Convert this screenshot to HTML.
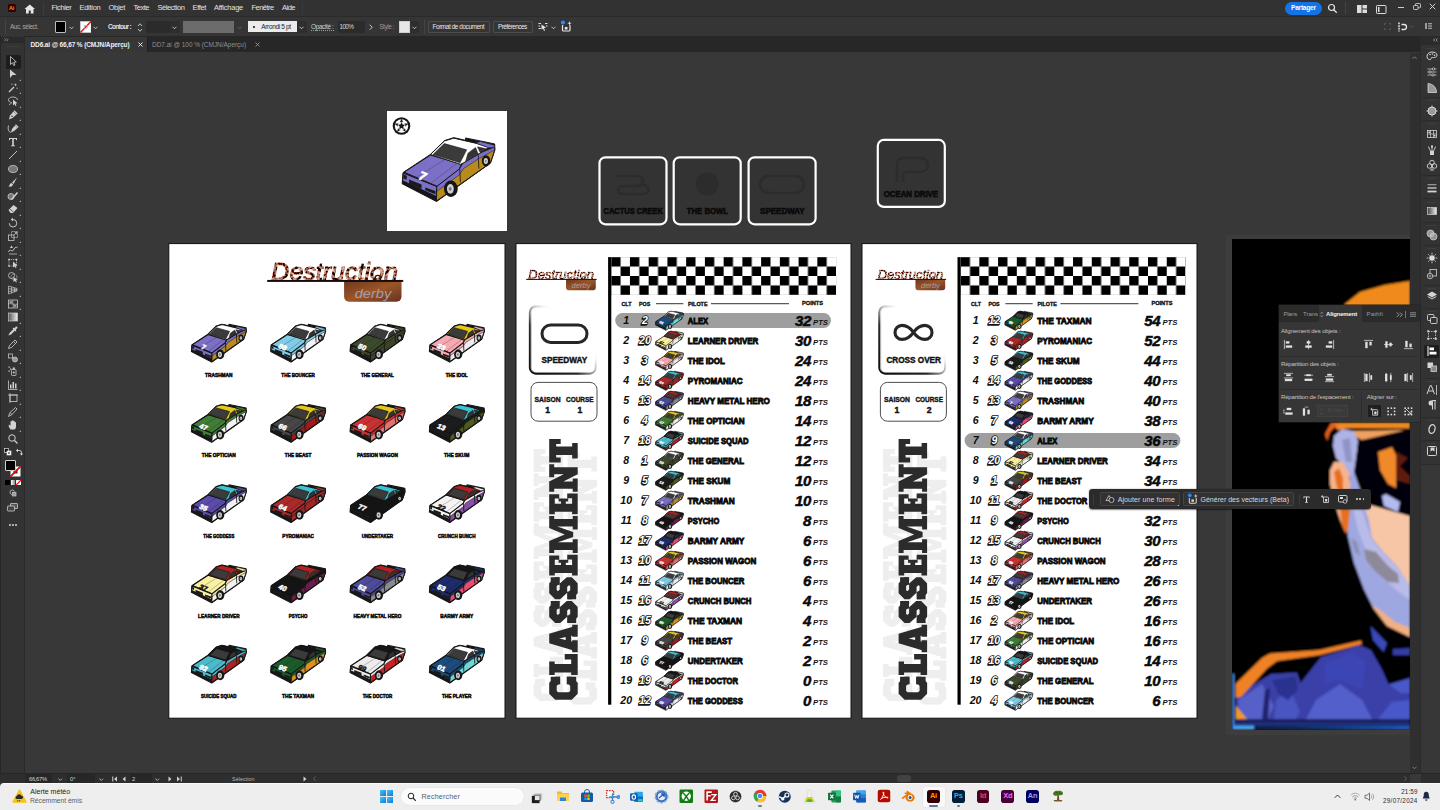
<!DOCTYPE html>
<html lang="fr"><head><meta charset="utf-8"><title>DD6.ai</title>
<style>

*{box-sizing:border-box;margin:0;padding:0}
html,body{width:1440px;height:810px;overflow:hidden;background:#383838;font-family:"Liberation Sans",sans-serif;}
body{position:relative}
.abs,.car,.t,.ab,.box{position:absolute}
.t{white-space:nowrap;line-height:1}
.ab{background:#fff;border:1px solid #0a0a0a;overflow:hidden}
.car{overflow:visible}
.cn{font:bold 62px "Liberation Sans",sans-serif;fill:var(--n)}
/* chrome */
#menubar{left:0;top:0;width:1440px;height:17px;background:#323232;border-bottom:1px solid #2b2b2b}
#ctrl{left:0;top:17px;width:1440px;height:20px;background:#353535;border-bottom:1px solid #2a2a2a}
#tabs{left:0;top:37px;width:1440px;height:16px;background:#282828}
#tools{left:0;top:37px;width:25px;height:735px;background:#333;border-right:1px solid #2a2a2a}
.m{position:absolute;top:3px;font-size:7.6px;color:#e0e0e0;white-space:nowrap;line-height:9px}
.c{position:absolute;font-size:6.2px;color:#d6d6d6;white-space:nowrap;line-height:8px}
/* names */
.nm{position:absolute;font-weight:bold;font-size:8.3px;color:#111;white-space:nowrap;line-height:10px;-webkit-text-stroke:0.35px #111;letter-spacing:0.1px}
.num{position:absolute;font-weight:bold;font-style:italic;font-size:11px;color:#111;white-space:nowrap;line-height:12px;text-align:center;width:20px}
.pos{position:absolute;font-weight:bold;font-style:italic;font-size:10.5px;color:#fff;-webkit-text-stroke:0.9px #111;white-space:nowrap;line-height:12px;text-align:center;width:20px}
.pts{position:absolute;font-weight:bold;font-style:italic;font-size:14.5px;color:#0a0a0a;white-space:nowrap;line-height:14px;text-align:right;width:40px;-webkit-text-stroke:0.4px #0a0a0a;letter-spacing:-0.5px}
.pt{position:absolute;font-weight:bold;font-style:italic;font-size:7.6px;color:#111;white-space:nowrap;line-height:9px;letter-spacing:0.2px}
.hd{position:absolute;font-weight:bold;font-size:5.6px;color:#111;white-space:nowrap;line-height:6px;-webkit-text-stroke:0.3px #111;letter-spacing:0.3px}
.lb{position:absolute;font-weight:bold;font-size:4.9px;color:#111;white-space:nowrap;line-height:6px;-webkit-text-stroke:0.45px #111;text-align:center;width:80px;letter-spacing:0.15px}

.mn{font-size:7.7px;color:#e2e2e2;line-height:9px;text-align:justify;text-align-last:justify;letter-spacing:0}

</style></head>
<body>
<svg class="abs" style="left:0;top:0" width="1440" height="810" viewBox="0 0 1440 810" font-family="Liberation Sans, sans-serif">
<defs>
<g id="car">
 <g stroke="#161616" stroke-width="var(--sw)" stroke-linejoin="round">
  <polygon points="128,470 134,402 300,292 385,208 442,190 512,206 514,192 690,228 692,264 664,345 337,578" fill="#161616"/>
  <polygon points="338,487 478,378 498,345 600,285 688,248 690,266 665,343 337,575" fill="var(--s)"/>
  <polygon points="338,487 478,378 498,345 600,285 688,248 688,266 600,314 498,380 478,414 338,517" fill="var(--b)" stroke-width="calc(var(--sw) * 0.5)"/>
  <polygon points="140,400 300,296 487,350 476,380 340,485" fill="var(--b)"/>
  <polygon points="135,405 338,487 336,548 131,452" fill="var(--b)"/>
  <polygon points="300,292 385,210 442,193 580,225 655,250 600,285 498,345 482,352" fill="var(--r)"/>
  <polygon points="575,222 602,213 688,236 688,248 655,252" fill="var(--b)" stroke-width="calc(var(--sw) * 0.5)"/>
 </g>
 <polygon points="316,292 384,226 520,264 480,342" fill="#3b3b3b" stroke="#161616" stroke-width="calc(var(--sw) * 0.6)"/>
 <polygon points="528,284 574,250 590,290 514,332" fill="#333" stroke="#161616" stroke-width="calc(var(--sw) * 0.5)"/>
 <polygon points="586,246 640,258 602,281" fill="#333" stroke="#161616" stroke-width="calc(var(--sw) * 0.5)"/>
 <polygon points="170,444 246,474 246,502 170,470" fill="#1a1a1a"/>
 <polygon points="268,492 330,514 330,534 268,510" fill="#1a1a1a"/>
 <polygon points="136,414 156,422 156,446 136,438" fill="#1a1a1a"/>
 <line x1="478" y1="380" x2="482" y2="462" stroke="#161616" stroke-width="calc(var(--sw) * 0.8)"/>
 <line x1="590" y1="292" x2="594" y2="378" stroke="#161616" stroke-width="calc(var(--sw) * 0.8)"/>
 <line x1="215" y1="430" x2="390" y2="322" stroke="#161616" stroke-width="calc(var(--sw) * 0.4)" opacity=".6"/>
 <line x1="300" y1="470" x2="455" y2="350" stroke="#161616" stroke-width="calc(var(--sw) * 0.4)" opacity=".6"/>
 <ellipse cx="424" cy="500" rx="42" ry="50" fill="#161616"/>
 <ellipse cx="421" cy="501" rx="21" ry="29" fill="#cfcfcf"/>
 <ellipse cx="420" cy="501" rx="9" ry="12" fill="#777"/>
 <ellipse cx="638" cy="331" rx="26" ry="34" fill="#161616"/>
 <ellipse cx="636.5" cy="332" rx="13" ry="18" fill="#cfcfcf"/>
 <ellipse cx="636" cy="332" rx="5" ry="7" fill="#777"/>
</g>
<pattern id="chk" x="611.2" y="257.1" width="18.74" height="18.9" patternUnits="userSpaceOnUse">
 <rect x="0" y="0" width="9.37" height="9.45" fill="#000"/><rect x="9.37" y="9.45" width="9.37" height="9.45" fill="#000"/>
</pattern>
<linearGradient id="rust" x1="0" y1="0" x2="1" y2="1">
 <stop offset="0" stop-color="#6e361e"/><stop offset=".5" stop-color="#9c5626"/><stop offset="1" stop-color="#643226"/>
</linearGradient>
<linearGradient id="rustt" x1="0" y1="0" x2="1" y2="0">
 <stop offset="0" stop-color="#7a2f2a"/><stop offset=".3" stop-color="#a0604a"/><stop offset=".55" stop-color="#6e3328"/><stop offset=".8" stop-color="#a86a50"/><stop offset="1" stop-color="#5a2a22"/>
</linearGradient>
<filter id="rustf" x="0" y="0" width="100%" height="100%"><feTurbulence type="fractalNoise" baseFrequency="0.6" numOctaves="2" seed="7" result="n"/><feColorMatrix in="n" type="matrix" values="2.0 0 0 0 -0.72  1.5 0 0 0 -0.66  1.25 0 0 0 -0.58  0 0 0 0 1" result="c"/><feComposite in="c" in2="SourceGraphic" operator="in"/></filter>
<linearGradient id="fadeb" x1="0" y1="1" x2="1" y2="0">
 <stop offset="0" stop-color="#0c0c0c"/><stop offset=".36" stop-color="#111" stop-opacity=".9"/><stop offset=".5" stop-color="#444" stop-opacity=".45"/><stop offset=".6" stop-color="#888" stop-opacity=".1"/><stop offset=".66" stop-color="#fff" stop-opacity="0"/><stop offset="1" stop-color="#fff" stop-opacity="0"/>
</linearGradient>
</defs>
<defs><g id="clsm"><path d="M15.50 1.50h7.50v9.50h-7.50z M15.50 17.50h7.50v9.50h-7.50z M27.28 0.00h8.50v28.50h-8.50z M24.78 0.00h13.50v5.50h-13.50z M24.78 22.00h21.00v6.50h-21.00z M40.28 15.50h5.50v13.00h-5.50z M56.56 0.00 L66.06 0.00 L74.56 28.50 L65.56 28.50 L61.31 10.00 L57.06 28.50 L48.06 28.50z M54.56 16.50h13.50v5.50h-13.50z M47.56 23.00h12.00v5.50h-12.00z M63.06 23.00h12.00v5.50h-12.00z M91.34 1.50h7.50v9.00h-7.50z M76.84 18.00h7.50v9.00h-7.50z M115.12 1.50h7.50v9.00h-7.50z M100.62 18.00h7.50v9.00h-7.50z M126.90 0.00h8.00v28.50h-8.00z M124.40 0.00h20.00v5.60h-20.00z M140.00 0.00h4.40v10.00h-4.40z M132.40 11.80h7.60v4.80h-7.60z M137.00 9.40h3.00v9.60h-3.00z M124.40 22.90h20.70v5.60h-20.70z M140.40 18.00h4.70v10.50h-4.70z M149.88 0.00h7.60v28.50h-7.60z M173.28 0.00h7.60v28.50h-7.60z M149.88 0.00 L158.88 0.00 L165.38 15.50 L171.88 0.00 L180.88 0.00 L180.88 5.00 L174.38 5.00 L167.88 24.00 L162.88 24.00 L156.38 5.00 L149.88 5.00z M146.88 0.00h8.00v5.00h-8.00z M175.88 0.00h8.00v5.00h-8.00z M146.88 23.50h13.60v5.00h-13.60z M170.28 23.50h13.60v5.00h-13.60z M188.16 0.00h8.00v28.50h-8.00z M185.66 0.00h20.00v5.60h-20.00z M201.26 0.00h4.40v10.00h-4.40z M193.66 11.80h7.60v4.80h-7.60z M198.26 9.40h3.00v9.60h-3.00z M185.66 22.90h20.70v5.60h-20.70z M201.66 18.00h4.70v10.50h-4.70z M211.14 0.00h7.20v28.50h-7.20z M225.44 0.00h7.20v28.50h-7.20z M211.14 0.00 L218.34 0.00 L232.64 28.50 L225.44 28.50z M208.14 0.00h10.50v5.00h-10.50z M208.14 23.50h13.20v5.00h-13.20z M222.44 0.00h13.20v5.00h-13.20z M237.42 0.00h23.40v7.00h-23.40z M237.42 0.00h5.00v11.50h-5.00z M255.82 0.00h5.00v11.50h-5.00z M244.87 0.00h8.50v28.50h-8.50z M241.42 23.00h15.40v5.50h-15.40z"/><path d="M19.25 10.50 L19.25 7.50 L15.50 3.75 L7.50 3.75 L3.75 7.50 L3.75 21.00 L7.50 24.75 L15.50 24.75 L19.25 21.00 L19.25 18.00 M95.09 10.00 L95.09 7.50 L91.34 3.75 L84.34 3.75 L80.59 7.50 L80.59 9.50 L84.84 14.25 L90.84 14.25 L95.09 19.00 L95.09 21.00 L91.34 24.75 L84.34 24.75 L80.59 21.00 L80.59 18.50 M118.87 10.00 L118.87 7.50 L115.12 3.75 L108.12 3.75 L104.37 7.50 L104.37 9.50 L108.62 14.25 L114.62 14.25 L118.87 19.00 L118.87 21.00 L115.12 24.75 L108.12 24.75 L104.37 21.00 L104.37 18.50" fill="none" stroke="currentColor" stroke-width="7.5" stroke-linejoin="miter"/></g></defs>
<rect x="387" y="111" width="120" height="120" fill="#fff"/>
<svg x="400.8" y="136.0" width="95.5" height="66.7" viewBox="120 180 580 405" overflow="visible" style="--b:#7b70c6;--s:#b98a1c;--r:#ffffff;--sw:6"><use href="#car"/><text x="0" y="0" font-size="74" font-weight="bold" fill="#fff" stroke="#fff" stroke-width="5" text-anchor="middle" transform="matrix(0.93,0.37,-0.5,0.85,240,446)">7</text></svg>
<circle cx="401.5" cy="126" r="8.8" fill="#161616"/><circle cx="401.5" cy="126" r="6.7" fill="#fff"/>
<polygon points="401.50,118.80 403.56,123.17 408.35,123.78 404.83,127.08 405.73,131.82 401.50,129.50 397.27,131.82 398.17,127.08 394.65,123.78 399.44,123.17" fill="#161616"/>
<circle cx="401.5" cy="126" r="3.9" fill="#fff"/>
<polygon points="401.50,122.10 402.62,124.46 405.21,124.79 403.31,126.59 403.79,129.16 401.50,127.90 399.21,129.16 399.69,126.59 397.79,124.79 400.38,124.46" fill="#161616"/>
<g>
<rect x="599.5" y="157.3" width="67" height="67" rx="6" fill="#333" stroke="#fff" stroke-width="2.2"/>
<path d="M616 176 h22 a5 5 0 0 1 0 10 h-16 a4 4 0 0 0 0 8 h22 a4.5 4.5 0 0 0 0 -9 h-8" fill="none" stroke="#2c2c2c" stroke-width="2.6"/>
<text x="603.6" y="214.3" font-size="8.2" font-weight="bold" fill="#0a0a0a" stroke="#0a0a0a" stroke-width=".6" textLength="59.3" lengthAdjust="spacingAndGlyphs">CACTUS CREEK</text>
<rect x="673.7" y="157.3" width="67" height="67" rx="6" fill="#333" stroke="#fff" stroke-width="2.2"/>
<circle cx="707" cy="184" r="11.5" fill="#2c2c2c"/>
<text x="686.8" y="214.3" font-size="8.2" font-weight="bold" fill="#0a0a0a" stroke="#0a0a0a" stroke-width=".6" textLength="41.3" lengthAdjust="spacingAndGlyphs">THE BOWL</text>
<rect x="748.6" y="157.3" width="67" height="67" rx="6" fill="#333" stroke="#fff" stroke-width="2.2"/>
<rect x="760" y="176" width="44" height="17" rx="8.5" fill="none" stroke="#2c2c2c" stroke-width="2.6"/>
<text x="760.1" y="214.3" font-size="8.2" font-weight="bold" fill="#0a0a0a" stroke="#0a0a0a" stroke-width=".6" textLength="44.5" lengthAdjust="spacingAndGlyphs">SPEEDWAY</text>
</g>
<rect x="877.8" y="139.9" width="67" height="67" rx="6" fill="#333" stroke="#fff" stroke-width="2.2"/>
<path d="M897 182 v-18 a6 6 0 0 1 6 -6 h18 a7 7 0 0 1 0 14 h-14 a4 4 0 0 0 -4 4 v6" fill="none" stroke="#2c2c2c" stroke-width="2.6"/>
<text x="883.8" y="197" font-size="8.2" font-weight="bold" fill="#0a0a0a" stroke="#0a0a0a" stroke-width=".6" textLength="54.2" lengthAdjust="spacingAndGlyphs">OCEAN DRIVE</text>
<rect x="168.8" y="243.6" width="336.2" height="474.6" fill="#fff" stroke="#101010" stroke-width="1"/>
<g transform="translate(267.2,262.8) scale(1.889)"><path d="M40.7 9.6 H71.1 V18 a2.6 2.6 0 0 1 -2.6 2.6 H43.3 a2.6 2.6 0 0 1 -2.6 -2.6 Z" fill="url(#rust)"/><text x="56" y="18.4" font-size="6.5" font-style="italic" fill="#a69cac" text-anchor="middle" textLength="19.3" lengthAdjust="spacingAndGlyphs">derby</text><text x="2.2" y="9.15" font-size="12.8" font-style="italic" fill="#7a3626" stroke="#7a3626" stroke-width=".5" textLength="67" lengthAdjust="spacingAndGlyphs" filter="url(#rustf)">Destruction</text><rect x="0" y="9.07" width="72" height="1.05" fill="#140c0c"/><circle cx="58.6" cy="8.2" r="1.5" fill="none" stroke="#2a1410" stroke-width=".7"/></g>
<svg x="190.6" y="323.2" width="56.5" height="39.5" viewBox="120 180 580 405" overflow="visible" style="--b:#7b70c6;--s:#b98a1c;--r:#ffffff;--sw:11"><use href="#car"/><text x="0" y="0" font-size="74" font-weight="bold" fill="#fff" stroke="#fff" stroke-width="5" text-anchor="middle" transform="matrix(0.93,0.37,-0.5,0.85,240,446)">7</text></svg>
<text x="218.8" y="377.0" font-size="5.2" font-weight="bold" fill="#0c0c0c" stroke="#0c0c0c" stroke-width=".5" text-anchor="middle" textLength="27.5" lengthAdjust="spacingAndGlyphs">TRASHMAN</text>
<svg x="269.9" y="323.2" width="56.5" height="39.5" viewBox="120 180 580 405" overflow="visible" style="--b:#7fcbe8;--s:#f2f2f2;--r:#ffffff;--sw:11"><use href="#car"/><text x="0" y="0" font-size="74" font-weight="bold" fill="#fff" stroke="#fff" stroke-width="5" text-anchor="middle" transform="matrix(0.93,0.37,-0.5,0.85,240,446)">88</text></svg>
<text x="298.1" y="377.0" font-size="5.2" font-weight="bold" fill="#0c0c0c" stroke="#0c0c0c" stroke-width=".5" text-anchor="middle" textLength="33.5" lengthAdjust="spacingAndGlyphs">THE BOUNCER</text>
<svg x="349.3" y="323.2" width="56.5" height="39.5" viewBox="120 180 580 405" overflow="visible" style="--b:#3e4a2c;--s:#3a4528;--r:#ffffff;--sw:11"><use href="#car"/><text x="0" y="0" font-size="74" font-weight="bold" fill="#fff" stroke="#fff" stroke-width="5" text-anchor="middle" transform="matrix(0.93,0.37,-0.5,0.85,240,446)">50</text></svg>
<text x="377.4" y="377.0" font-size="5.2" font-weight="bold" fill="#0c0c0c" stroke="#0c0c0c" stroke-width=".5" text-anchor="middle" textLength="33" lengthAdjust="spacingAndGlyphs">THE GENERAL</text>
<svg x="428.6" y="323.2" width="56.5" height="39.5" viewBox="120 180 580 405" overflow="visible" style="--b:#f5a9b2;--s:#ececec;--r:#e6c81c;--sw:11"><use href="#car"/><text x="0" y="0" font-size="74" font-weight="bold" fill="#fff" stroke="#fff" stroke-width="5" text-anchor="middle" transform="matrix(0.93,0.37,-0.5,0.85,240,446)">23</text></svg>
<text x="456.7" y="377.0" font-size="5.2" font-weight="bold" fill="#0c0c0c" stroke="#0c0c0c" stroke-width=".5" text-anchor="middle" textLength="22" lengthAdjust="spacingAndGlyphs">THE IDOL</text>
<svg x="190.6" y="403.4" width="56.5" height="39.5" viewBox="120 180 580 405" overflow="visible" style="--b:#3f7d38;--s:#f2f2f2;--r:#e6c81c;--sw:11"><use href="#car"/><text x="0" y="0" font-size="74" font-weight="bold" fill="#fff" stroke="#fff" stroke-width="5" text-anchor="middle" transform="matrix(0.93,0.37,-0.5,0.85,240,446)">47</text></svg>
<text x="218.8" y="457.2" font-size="5.2" font-weight="bold" fill="#0c0c0c" stroke="#0c0c0c" stroke-width=".5" text-anchor="middle" textLength="34" lengthAdjust="spacingAndGlyphs">THE OPTICIAN</text>
<svg x="269.9" y="403.4" width="56.5" height="39.5" viewBox="120 180 580 405" overflow="visible" style="--b:#474747;--s:#a31a1a;--r:#e6c81c;--sw:11"><use href="#car"/><text x="0" y="0" font-size="74" font-weight="bold" fill="#fff" stroke="#fff" stroke-width="5" text-anchor="middle" transform="matrix(0.93,0.37,-0.5,0.85,240,446)">66</text></svg>
<text x="298.1" y="457.2" font-size="5.2" font-weight="bold" fill="#0c0c0c" stroke="#0c0c0c" stroke-width=".5" text-anchor="middle" textLength="26.5" lengthAdjust="spacingAndGlyphs">THE BEAST</text>
<svg x="349.3" y="403.4" width="56.5" height="39.5" viewBox="120 180 580 405" overflow="visible" style="--b:#c93232;--s:#e27272;--r:#e6c81c;--sw:11"><use href="#car"/><text x="0" y="0" font-size="74" font-weight="bold" fill="#fff" stroke="#fff" stroke-width="5" text-anchor="middle" transform="matrix(0.93,0.37,-0.5,0.85,240,446)">69</text></svg>
<text x="377.4" y="457.2" font-size="5.2" font-weight="bold" fill="#0c0c0c" stroke="#0c0c0c" stroke-width=".5" text-anchor="middle" textLength="41" lengthAdjust="spacingAndGlyphs">PASSION WAGON</text>
<svg x="428.6" y="403.4" width="56.5" height="39.5" viewBox="120 180 580 405" overflow="visible" style="--b:#1c1c1c;--s:#4c5c1c;--r:#41c2d2;--sw:11"><use href="#car"/><text x="0" y="0" font-size="74" font-weight="bold" fill="#fff" stroke="#fff" stroke-width="5" text-anchor="middle" transform="matrix(0.93,0.37,-0.5,0.85,240,446)">13</text></svg>
<text x="456.7" y="457.2" font-size="5.2" font-weight="bold" fill="#0c0c0c" stroke="#0c0c0c" stroke-width=".5" text-anchor="middle" textLength="25.5" lengthAdjust="spacingAndGlyphs">THE SKUM</text>
<svg x="190.6" y="483.7" width="56.5" height="39.5" viewBox="120 180 580 405" overflow="visible" style="--b:#5b4caa;--s:#f2f2f2;--r:#41c2d2;--sw:11"><use href="#car"/><text x="0" y="0" font-size="74" font-weight="bold" fill="#fff" stroke="#fff" stroke-width="5" text-anchor="middle" transform="matrix(0.93,0.37,-0.5,0.85,240,446)">35</text></svg>
<text x="218.8" y="537.5" font-size="5.2" font-weight="bold" fill="#0c0c0c" stroke="#0c0c0c" stroke-width=".5" text-anchor="middle" textLength="31" lengthAdjust="spacingAndGlyphs">THE GODDESS</text>
<svg x="269.9" y="483.7" width="56.5" height="39.5" viewBox="120 180 580 405" overflow="visible" style="--b:#aa2a2a;--s:#a02626;--r:#41c2d2;--sw:11"><use href="#car"/><text x="0" y="0" font-size="74" font-weight="bold" fill="#fff" stroke="#fff" stroke-width="5" text-anchor="middle" transform="matrix(0.93,0.37,-0.5,0.85,240,446)">64</text></svg>
<text x="298.1" y="537.5" font-size="5.2" font-weight="bold" fill="#0c0c0c" stroke="#0c0c0c" stroke-width=".5" text-anchor="middle" textLength="31.5" lengthAdjust="spacingAndGlyphs">PYROMANIAC</text>
<svg x="349.3" y="483.7" width="56.5" height="39.5" viewBox="120 180 580 405" overflow="visible" style="--b:#141414;--s:#141414;--r:#41c2d2;--sw:11"><use href="#car"/><text x="0" y="0" font-size="74" font-weight="bold" fill="#fff" stroke="#fff" stroke-width="5" text-anchor="middle" transform="matrix(0.93,0.37,-0.5,0.85,240,446)">77</text></svg>
<text x="377.4" y="537.5" font-size="5.2" font-weight="bold" fill="#0c0c0c" stroke="#0c0c0c" stroke-width=".5" text-anchor="middle" textLength="31.5" lengthAdjust="spacingAndGlyphs">UNDERTAKER</text>
<svg x="428.6" y="483.7" width="56.5" height="39.5" viewBox="120 180 580 405" overflow="visible" style="--b:#f4f4f4;--s:#8b4caa;--r:#b22222;--sw:11"><use href="#car"/><text x="0" y="0" font-size="74" font-weight="bold" fill="#111" stroke="#111" stroke-width="5" text-anchor="middle" transform="matrix(0.93,0.37,-0.5,0.85,240,446)">22</text></svg>
<text x="456.7" y="537.5" font-size="5.2" font-weight="bold" fill="#0c0c0c" stroke="#0c0c0c" stroke-width=".5" text-anchor="middle" textLength="37.5" lengthAdjust="spacingAndGlyphs">CRUNCH BUNCH</text>
<svg x="190.6" y="564.0" width="56.5" height="39.5" viewBox="120 180 580 405" overflow="visible" style="--b:#f8f0a2;--s:#f2f2f2;--r:#b22222;--sw:11"><use href="#car"/><text x="0" y="0" font-size="74" font-weight="bold" fill="#111" stroke="#111" stroke-width="5" text-anchor="middle" transform="matrix(0.93,0.37,-0.5,0.85,240,446)">37</text></svg>
<text x="218.8" y="617.8" font-size="5.2" font-weight="bold" fill="#0c0c0c" stroke="#0c0c0c" stroke-width=".5" text-anchor="middle" textLength="41.5" lengthAdjust="spacingAndGlyphs">LEARNER DRIVER</text>
<svg x="269.9" y="564.0" width="56.5" height="39.5" viewBox="120 180 580 405" overflow="visible" style="--b:#141414;--s:#6b1c4c;--r:#b22222;--sw:11"><use href="#car"/><text x="0" y="0" font-size="74" font-weight="bold" fill="#fff" stroke="#fff" stroke-width="5" text-anchor="middle" transform="matrix(0.93,0.37,-0.5,0.85,240,446)">40</text></svg>
<text x="298.1" y="617.8" font-size="5.2" font-weight="bold" fill="#0c0c0c" stroke="#0c0c0c" stroke-width=".5" text-anchor="middle" textLength="18.5" lengthAdjust="spacingAndGlyphs">PSYCHO</text>
<svg x="349.3" y="564.0" width="56.5" height="39.5" viewBox="120 180 580 405" overflow="visible" style="--b:#4c4c9a;--s:#8a8a8a;--r:#b22222;--sw:11"><use href="#car"/><text x="0" y="0" font-size="74" font-weight="bold" fill="#fff" stroke="#fff" stroke-width="5" text-anchor="middle" transform="matrix(0.93,0.37,-0.5,0.85,240,446)">52</text></svg>
<text x="377.4" y="617.8" font-size="5.2" font-weight="bold" fill="#0c0c0c" stroke="#0c0c0c" stroke-width=".5" text-anchor="middle" textLength="48" lengthAdjust="spacingAndGlyphs">HEAVY METAL HERO</text>
<svg x="428.6" y="564.0" width="56.5" height="39.5" viewBox="120 180 580 405" overflow="visible" style="--b:#1c2c6c;--s:#e94c6c;--r:#151515;--sw:11"><use href="#car"/><text x="0" y="0" font-size="74" font-weight="bold" fill="#fff" stroke="#fff" stroke-width="5" text-anchor="middle" transform="matrix(0.93,0.37,-0.5,0.85,240,446)">53</text></svg>
<text x="456.7" y="617.8" font-size="5.2" font-weight="bold" fill="#0c0c0c" stroke="#0c0c0c" stroke-width=".5" text-anchor="middle" textLength="33" lengthAdjust="spacingAndGlyphs">BARMY ARMY</text>
<svg x="190.6" y="644.2" width="56.5" height="39.5" viewBox="120 180 580 405" overflow="visible" style="--b:#4cbaca;--s:#aa2222;--r:#151515;--sw:11"><use href="#car"/><text x="0" y="0" font-size="74" font-weight="bold" fill="#fff" stroke="#fff" stroke-width="5" text-anchor="middle" transform="matrix(0.93,0.37,-0.5,0.85,240,446)">82</text></svg>
<text x="218.8" y="698.0" font-size="5.2" font-weight="bold" fill="#0c0c0c" stroke="#0c0c0c" stroke-width=".5" text-anchor="middle" textLength="35.5" lengthAdjust="spacingAndGlyphs">SUICIDE SQUAD</text>
<svg x="269.9" y="644.2" width="56.5" height="39.5" viewBox="120 180 580 405" overflow="visible" style="--b:#1c5c2c;--s:#da921c;--r:#151515;--sw:11"><use href="#car"/><text x="0" y="0" font-size="74" font-weight="bold" fill="#fff" stroke="#fff" stroke-width="5" text-anchor="middle" transform="matrix(0.93,0.37,-0.5,0.85,240,446)">95</text></svg>
<text x="298.1" y="698.0" font-size="5.2" font-weight="bold" fill="#0c0c0c" stroke="#0c0c0c" stroke-width=".5" text-anchor="middle" textLength="32" lengthAdjust="spacingAndGlyphs">THE TAXMAN</text>
<svg x="349.3" y="644.2" width="56.5" height="39.5" viewBox="120 180 580 405" overflow="visible" style="--b:#ececec;--s:#ca2222;--r:#151515;--sw:11"><use href="#car"/><text x="0" y="0" font-size="74" font-weight="bold" fill="#111" stroke="#111" stroke-width="5" text-anchor="middle" transform="matrix(0.93,0.37,-0.5,0.85,240,446)">99</text></svg>
<text x="377.4" y="698.0" font-size="5.2" font-weight="bold" fill="#0c0c0c" stroke="#0c0c0c" stroke-width=".5" text-anchor="middle" textLength="29.5" lengthAdjust="spacingAndGlyphs">THE DOCTOR</text>
<svg x="428.6" y="644.2" width="56.5" height="39.5" viewBox="120 180 580 405" overflow="visible" style="--b:#1c4c7c;--s:#6cdad2;--r:#ffffff;--sw:11"><use href="#car"/><text x="0" y="0" font-size="74" font-weight="bold" fill="#fff" stroke="#fff" stroke-width="5" text-anchor="middle" transform="matrix(0.93,0.37,-0.5,0.85,240,446)">01</text></svg>
<text x="456.7" y="698.0" font-size="5.2" font-weight="bold" fill="#0c0c0c" stroke="#0c0c0c" stroke-width=".5" text-anchor="middle" textLength="29.5" lengthAdjust="spacingAndGlyphs">THE PLAYER</text>
<rect x="516" y="243.6" width="335" height="474.6" fill="#fff" stroke="#101010" stroke-width="1"/>
<g transform="translate(0,0)">
<use href="#clsm" transform="translate(533.6,701) rotate(-90) scale(0.966,1.03)" fill="#eeeeee" color="#eeeeee"/>
<use href="#clsm" transform="translate(567.6,704.6) rotate(-90) scale(0.966,1.03)" fill="#eeeeee" color="#eeeeee"/>
<use href="#clsm" transform="translate(549.2,699.8) rotate(-90)" fill="#2b2b2b" color="#2b2b2b"/>
<g transform="translate(526.2,270.0) scale(0.979)"><path d="M40.7 9.6 H71.1 V18 a2.6 2.6 0 0 1 -2.6 2.6 H43.3 a2.6 2.6 0 0 1 -2.6 -2.6 Z" fill="url(#rust)"/><text x="56" y="18.4" font-size="6.5" font-style="italic" fill="#a69cac" text-anchor="middle" textLength="19.3" lengthAdjust="spacingAndGlyphs">derby</text><text x="2.2" y="9.15" font-size="12.8" font-style="italic" fill="#7a3626" stroke="#7a3626" stroke-width=".5" textLength="67" lengthAdjust="spacingAndGlyphs" filter="url(#rustf)">Destruction</text><rect x="0" y="9.07" width="72" height="1.05" fill="#140c0c"/><circle cx="58.6" cy="8.2" r="1.5" fill="none" stroke="#2a1410" stroke-width=".7"/></g>
<rect x="529.8" y="306.2" width="66" height="67.5" rx="6" fill="#fff" stroke="url(#fadeb)" stroke-width="1.9"/>
<rect x="531.3" y="307.6" width="64" height="65" rx="5" fill="none" stroke="url(#fadeb)" stroke-width=".5" opacity=".6"/>
<rect x="542" y="325" width="45" height="17.4" rx="8.7" fill="none" stroke="#262626" stroke-width="3"/>
<text x="564.3" y="362.9" font-size="8.2" font-weight="bold" fill="#111" stroke="#111" stroke-width=".4" text-anchor="middle">SPEEDWAY</text>
<rect x="531" y="382.4" width="66" height="38.8" rx="7" fill="#fff" stroke="#3a3a3a" stroke-width=".9"/>
<g font-size="7.7" font-weight="bold" fill="#111" stroke="#111" stroke-width=".4" text-anchor="middle">
<text x="547.6" y="401.6" textLength="26" lengthAdjust="spacingAndGlyphs">SAISON</text><text x="579.8" y="401.6" textLength="27.5" lengthAdjust="spacingAndGlyphs">COURSE</text>
<text x="547.6" y="413.2" font-size="8.6">1</text><text x="579.8" y="413.2" font-size="8.6">1</text></g>
<rect x="608.1" y="257.1" width="3.2" height="447.6" fill="#000"/>
<rect x="611.2" y="257.1" width="224.9" height="37.8" fill="url(#chk)"/>
<g font-size="5.7" font-weight="bold" fill="#111" stroke="#111" stroke-width=".35">
<text x="621.5" y="305.9" textLength="10" lengthAdjust="spacingAndGlyphs">CLT</text><text x="639" y="305.9" textLength="11.2" lengthAdjust="spacingAndGlyphs">POS</text>
<text x="688" y="305.9" textLength="19.5" lengthAdjust="spacingAndGlyphs">PILOTE</text><text x="802" y="305.4" textLength="21" lengthAdjust="spacingAndGlyphs">POINTS</text></g>
<rect x="656" y="303.2" width="27.3" height="1" fill="#333"/><rect x="711" y="303.2" width="78" height="1" fill="#333"/>
<rect x="615.2" y="313.1" width="215.8" height="14.8" rx="7.4" fill="#9e9e9e"/>
<text x="626.2" y="324.3" font-size="10.6" font-weight="bold" font-style="italic" fill="#0c0c0c" text-anchor="middle">1</text>
<text x="644.2" y="324.9" font-size="10.6" font-weight="bold" font-style="italic" fill="#161616" stroke="#161616" stroke-width="1.3" text-anchor="middle" letter-spacing="-.1">2</text>
<text x="644.9" y="324.3" font-size="10.6" font-weight="bold" font-style="italic" fill="#fff" stroke="#161616" stroke-width="1.4" paint-order="stroke" text-anchor="middle" letter-spacing="-.1">2</text>
<svg x="655.0" y="310.6" width="28.8" height="20.1" viewBox="120 180 580 405" overflow="visible" style="--b:#1c4c7c;--s:#6cdad2;--r:#ffffff;--sw:10"><use href="#car"/><text x="0" y="0" font-size="74" font-weight="bold" fill="#fff" stroke="#fff" stroke-width="5" text-anchor="middle" transform="matrix(0.93,0.37,-0.5,0.85,240,446)">01</text></svg>
<text x="687.8" y="323.6" font-size="8.3" font-weight="bold" fill="#0a0a0a" stroke="#0a0a0a" stroke-width=".8" stroke-linejoin="miter" textLength="20.2" lengthAdjust="spacingAndGlyphs">ALEX</text>
<text x="811" y="325.7" font-size="15" font-weight="bold" font-style="italic" fill="#0a0a0a" stroke="#0a0a0a" stroke-width=".5" text-anchor="end" letter-spacing="-.3">32</text>
<text x="813" y="324.8" font-size="8" font-weight="bold" font-style="italic" fill="#111" textLength="15" lengthAdjust="spacingAndGlyphs">PTS</text>
<text x="626.2" y="344.3" font-size="10.6" font-weight="bold" font-style="italic" fill="#0c0c0c" text-anchor="middle">2</text>
<text x="644.2" y="344.9" font-size="10.6" font-weight="bold" font-style="italic" fill="#161616" stroke="#161616" stroke-width="1.3" text-anchor="middle" letter-spacing="-.1">20</text>
<text x="644.9" y="344.3" font-size="10.6" font-weight="bold" font-style="italic" fill="#fff" stroke="#161616" stroke-width="1.4" paint-order="stroke" text-anchor="middle" letter-spacing="-.1">20</text>
<svg x="655.0" y="330.6" width="28.8" height="20.1" viewBox="120 180 580 405" overflow="visible" style="--b:#f8f0a2;--s:#f2f2f2;--r:#b22222;--sw:10"><use href="#car"/><text x="0" y="0" font-size="74" font-weight="bold" fill="#111" stroke="#111" stroke-width="5" text-anchor="middle" transform="matrix(0.93,0.37,-0.5,0.85,240,446)">37</text></svg>
<text x="687.8" y="343.6" font-size="8.3" font-weight="bold" fill="#0a0a0a" stroke="#0a0a0a" stroke-width=".8" stroke-linejoin="miter" textLength="70.5" lengthAdjust="spacingAndGlyphs">LEARNER DRIVER</text>
<text x="811" y="345.7" font-size="15" font-weight="bold" font-style="italic" fill="#0a0a0a" stroke="#0a0a0a" stroke-width=".5" text-anchor="end" letter-spacing="-.3">30</text>
<text x="813" y="344.8" font-size="8" font-weight="bold" font-style="italic" fill="#111" textLength="15" lengthAdjust="spacingAndGlyphs">PTS</text>
<text x="626.2" y="364.3" font-size="10.6" font-weight="bold" font-style="italic" fill="#0c0c0c" text-anchor="middle">3</text>
<text x="644.2" y="364.9" font-size="10.6" font-weight="bold" font-style="italic" fill="#161616" stroke="#161616" stroke-width="1.3" text-anchor="middle" letter-spacing="-.1">3</text>
<text x="644.9" y="364.3" font-size="10.6" font-weight="bold" font-style="italic" fill="#fff" stroke="#161616" stroke-width="1.4" paint-order="stroke" text-anchor="middle" letter-spacing="-.1">3</text>
<svg x="655.0" y="350.6" width="28.8" height="20.1" viewBox="120 180 580 405" overflow="visible" style="--b:#f5a9b2;--s:#ececec;--r:#e6c81c;--sw:10"><use href="#car"/><text x="0" y="0" font-size="74" font-weight="bold" fill="#fff" stroke="#fff" stroke-width="5" text-anchor="middle" transform="matrix(0.93,0.37,-0.5,0.85,240,446)">23</text></svg>
<text x="687.8" y="363.6" font-size="8.3" font-weight="bold" fill="#0a0a0a" stroke="#0a0a0a" stroke-width=".8" stroke-linejoin="miter" textLength="37" lengthAdjust="spacingAndGlyphs">THE IDOL</text>
<text x="811" y="365.7" font-size="15" font-weight="bold" font-style="italic" fill="#0a0a0a" stroke="#0a0a0a" stroke-width=".5" text-anchor="end" letter-spacing="-.3">24</text>
<text x="813" y="364.8" font-size="8" font-weight="bold" font-style="italic" fill="#111" textLength="15" lengthAdjust="spacingAndGlyphs">PTS</text>
<text x="626.2" y="384.3" font-size="10.6" font-weight="bold" font-style="italic" fill="#0c0c0c" text-anchor="middle">4</text>
<text x="644.2" y="384.9" font-size="10.6" font-weight="bold" font-style="italic" fill="#161616" stroke="#161616" stroke-width="1.3" text-anchor="middle" letter-spacing="-.1">14</text>
<text x="644.9" y="384.3" font-size="10.6" font-weight="bold" font-style="italic" fill="#fff" stroke="#161616" stroke-width="1.4" paint-order="stroke" text-anchor="middle" letter-spacing="-.1">14</text>
<svg x="655.0" y="370.6" width="28.8" height="20.1" viewBox="120 180 580 405" overflow="visible" style="--b:#aa2a2a;--s:#a02626;--r:#41c2d2;--sw:10"><use href="#car"/><text x="0" y="0" font-size="74" font-weight="bold" fill="#fff" stroke="#fff" stroke-width="5" text-anchor="middle" transform="matrix(0.93,0.37,-0.5,0.85,240,446)">64</text></svg>
<text x="687.8" y="383.6" font-size="8.3" font-weight="bold" fill="#0a0a0a" stroke="#0a0a0a" stroke-width=".8" stroke-linejoin="miter" textLength="54.8" lengthAdjust="spacingAndGlyphs">PYROMANIAC</text>
<text x="811" y="385.7" font-size="15" font-weight="bold" font-style="italic" fill="#0a0a0a" stroke="#0a0a0a" stroke-width=".5" text-anchor="end" letter-spacing="-.3">24</text>
<text x="813" y="384.8" font-size="8" font-weight="bold" font-style="italic" fill="#111" textLength="15" lengthAdjust="spacingAndGlyphs">PTS</text>
<text x="626.2" y="404.3" font-size="10.6" font-weight="bold" font-style="italic" fill="#0c0c0c" text-anchor="middle">5</text>
<text x="644.2" y="404.9" font-size="10.6" font-weight="bold" font-style="italic" fill="#161616" stroke="#161616" stroke-width="1.3" text-anchor="middle" letter-spacing="-.1">13</text>
<text x="644.9" y="404.3" font-size="10.6" font-weight="bold" font-style="italic" fill="#fff" stroke="#161616" stroke-width="1.4" paint-order="stroke" text-anchor="middle" letter-spacing="-.1">13</text>
<svg x="655.0" y="390.6" width="28.8" height="20.1" viewBox="120 180 580 405" overflow="visible" style="--b:#4c4c9a;--s:#8a8a8a;--r:#b22222;--sw:10"><use href="#car"/><text x="0" y="0" font-size="74" font-weight="bold" fill="#fff" stroke="#fff" stroke-width="5" text-anchor="middle" transform="matrix(0.93,0.37,-0.5,0.85,240,446)">52</text></svg>
<text x="687.8" y="403.6" font-size="8.3" font-weight="bold" fill="#0a0a0a" stroke="#0a0a0a" stroke-width=".8" stroke-linejoin="miter" textLength="82.1" lengthAdjust="spacingAndGlyphs">HEAVY METAL HERO</text>
<text x="811" y="405.7" font-size="15" font-weight="bold" font-style="italic" fill="#0a0a0a" stroke="#0a0a0a" stroke-width=".5" text-anchor="end" letter-spacing="-.3">18</text>
<text x="813" y="404.8" font-size="8" font-weight="bold" font-style="italic" fill="#111" textLength="15" lengthAdjust="spacingAndGlyphs">PTS</text>
<text x="626.2" y="424.3" font-size="10.6" font-weight="bold" font-style="italic" fill="#0c0c0c" text-anchor="middle">6</text>
<text x="644.2" y="424.9" font-size="10.6" font-weight="bold" font-style="italic" fill="#161616" stroke="#161616" stroke-width="1.3" text-anchor="middle" letter-spacing="-.1">4</text>
<text x="644.9" y="424.3" font-size="10.6" font-weight="bold" font-style="italic" fill="#fff" stroke="#161616" stroke-width="1.4" paint-order="stroke" text-anchor="middle" letter-spacing="-.1">4</text>
<svg x="655.0" y="410.6" width="28.8" height="20.1" viewBox="120 180 580 405" overflow="visible" style="--b:#3f7d38;--s:#f2f2f2;--r:#e6c81c;--sw:10"><use href="#car"/><text x="0" y="0" font-size="74" font-weight="bold" fill="#fff" stroke="#fff" stroke-width="5" text-anchor="middle" transform="matrix(0.93,0.37,-0.5,0.85,240,446)">47</text></svg>
<text x="687.8" y="423.6" font-size="8.3" font-weight="bold" fill="#0a0a0a" stroke="#0a0a0a" stroke-width=".8" stroke-linejoin="miter" textLength="56.9" lengthAdjust="spacingAndGlyphs">THE OPTICIAN</text>
<text x="811" y="425.7" font-size="15" font-weight="bold" font-style="italic" fill="#0a0a0a" stroke="#0a0a0a" stroke-width=".5" text-anchor="end" letter-spacing="-.3">14</text>
<text x="813" y="424.8" font-size="8" font-weight="bold" font-style="italic" fill="#111" textLength="15" lengthAdjust="spacingAndGlyphs">PTS</text>
<text x="626.2" y="444.3" font-size="10.6" font-weight="bold" font-style="italic" fill="#0c0c0c" text-anchor="middle">7</text>
<text x="644.2" y="444.9" font-size="10.6" font-weight="bold" font-style="italic" fill="#161616" stroke="#161616" stroke-width="1.3" text-anchor="middle" letter-spacing="-.1">18</text>
<text x="644.9" y="444.3" font-size="10.6" font-weight="bold" font-style="italic" fill="#fff" stroke="#161616" stroke-width="1.4" paint-order="stroke" text-anchor="middle" letter-spacing="-.1">18</text>
<svg x="655.0" y="430.6" width="28.8" height="20.1" viewBox="120 180 580 405" overflow="visible" style="--b:#4cbaca;--s:#aa2222;--r:#151515;--sw:10"><use href="#car"/><text x="0" y="0" font-size="74" font-weight="bold" fill="#fff" stroke="#fff" stroke-width="5" text-anchor="middle" transform="matrix(0.93,0.37,-0.5,0.85,240,446)">82</text></svg>
<text x="687.8" y="443.6" font-size="8.3" font-weight="bold" fill="#0a0a0a" stroke="#0a0a0a" stroke-width=".8" stroke-linejoin="miter" textLength="60.8" lengthAdjust="spacingAndGlyphs">SUICIDE SQUAD</text>
<text x="811" y="445.7" font-size="15" font-weight="bold" font-style="italic" fill="#0a0a0a" stroke="#0a0a0a" stroke-width=".5" text-anchor="end" letter-spacing="-.3">12</text>
<text x="813" y="444.8" font-size="8" font-weight="bold" font-style="italic" fill="#111" textLength="15" lengthAdjust="spacingAndGlyphs">PTS</text>
<text x="626.2" y="464.3" font-size="10.6" font-weight="bold" font-style="italic" fill="#0c0c0c" text-anchor="middle">8</text>
<text x="644.2" y="464.9" font-size="10.6" font-weight="bold" font-style="italic" fill="#161616" stroke="#161616" stroke-width="1.3" text-anchor="middle" letter-spacing="-.1">1</text>
<text x="644.9" y="464.3" font-size="10.6" font-weight="bold" font-style="italic" fill="#fff" stroke="#161616" stroke-width="1.4" paint-order="stroke" text-anchor="middle" letter-spacing="-.1">1</text>
<svg x="655.0" y="450.6" width="28.8" height="20.1" viewBox="120 180 580 405" overflow="visible" style="--b:#3e4a2c;--s:#3a4528;--r:#ffffff;--sw:10"><use href="#car"/><text x="0" y="0" font-size="74" font-weight="bold" fill="#fff" stroke="#fff" stroke-width="5" text-anchor="middle" transform="matrix(0.93,0.37,-0.5,0.85,240,446)">50</text></svg>
<text x="687.8" y="463.6" font-size="8.3" font-weight="bold" fill="#0a0a0a" stroke="#0a0a0a" stroke-width=".8" stroke-linejoin="miter" textLength="56.3" lengthAdjust="spacingAndGlyphs">THE GENERAL</text>
<text x="811" y="465.7" font-size="15" font-weight="bold" font-style="italic" fill="#0a0a0a" stroke="#0a0a0a" stroke-width=".5" text-anchor="end" letter-spacing="-.3">12</text>
<text x="813" y="464.8" font-size="8" font-weight="bold" font-style="italic" fill="#111" textLength="15" lengthAdjust="spacingAndGlyphs">PTS</text>
<text x="626.2" y="484.3" font-size="10.6" font-weight="bold" font-style="italic" fill="#0c0c0c" text-anchor="middle">9</text>
<text x="644.2" y="484.9" font-size="10.6" font-weight="bold" font-style="italic" fill="#161616" stroke="#161616" stroke-width="1.3" text-anchor="middle" letter-spacing="-.1">5</text>
<text x="644.9" y="484.3" font-size="10.6" font-weight="bold" font-style="italic" fill="#fff" stroke="#161616" stroke-width="1.4" paint-order="stroke" text-anchor="middle" letter-spacing="-.1">5</text>
<svg x="655.0" y="470.6" width="28.8" height="20.1" viewBox="120 180 580 405" overflow="visible" style="--b:#1c1c1c;--s:#4c5c1c;--r:#41c2d2;--sw:10"><use href="#car"/><text x="0" y="0" font-size="74" font-weight="bold" fill="#fff" stroke="#fff" stroke-width="5" text-anchor="middle" transform="matrix(0.93,0.37,-0.5,0.85,240,446)">13</text></svg>
<text x="687.8" y="483.6" font-size="8.3" font-weight="bold" fill="#0a0a0a" stroke="#0a0a0a" stroke-width=".8" stroke-linejoin="miter" textLength="42.4" lengthAdjust="spacingAndGlyphs">THE SKUM</text>
<text x="811" y="485.7" font-size="15" font-weight="bold" font-style="italic" fill="#0a0a0a" stroke="#0a0a0a" stroke-width=".5" text-anchor="end" letter-spacing="-.3">10</text>
<text x="813" y="484.8" font-size="8" font-weight="bold" font-style="italic" fill="#111" textLength="15" lengthAdjust="spacingAndGlyphs">PTS</text>
<text x="626.2" y="504.3" font-size="10.6" font-weight="bold" font-style="italic" fill="#0c0c0c" text-anchor="middle">10</text>
<text x="644.2" y="504.9" font-size="10.6" font-weight="bold" font-style="italic" fill="#161616" stroke="#161616" stroke-width="1.3" text-anchor="middle" letter-spacing="-.1">7</text>
<text x="644.9" y="504.3" font-size="10.6" font-weight="bold" font-style="italic" fill="#fff" stroke="#161616" stroke-width="1.4" paint-order="stroke" text-anchor="middle" letter-spacing="-.1">7</text>
<svg x="655.0" y="490.6" width="28.8" height="20.1" viewBox="120 180 580 405" overflow="visible" style="--b:#7b70c6;--s:#b98a1c;--r:#ffffff;--sw:10"><use href="#car"/><text x="0" y="0" font-size="74" font-weight="bold" fill="#fff" stroke="#fff" stroke-width="5" text-anchor="middle" transform="matrix(0.93,0.37,-0.5,0.85,240,446)">7</text></svg>
<text x="687.8" y="503.6" font-size="8.3" font-weight="bold" fill="#0a0a0a" stroke="#0a0a0a" stroke-width=".8" stroke-linejoin="miter" textLength="46.9" lengthAdjust="spacingAndGlyphs">TRASHMAN</text>
<text x="811" y="505.7" font-size="15" font-weight="bold" font-style="italic" fill="#0a0a0a" stroke="#0a0a0a" stroke-width=".5" text-anchor="end" letter-spacing="-.3">10</text>
<text x="813" y="504.8" font-size="8" font-weight="bold" font-style="italic" fill="#111" textLength="15" lengthAdjust="spacingAndGlyphs">PTS</text>
<text x="626.2" y="524.3" font-size="10.6" font-weight="bold" font-style="italic" fill="#0c0c0c" text-anchor="middle">11</text>
<text x="644.2" y="524.9" font-size="10.6" font-weight="bold" font-style="italic" fill="#161616" stroke="#161616" stroke-width="1.3" text-anchor="middle" letter-spacing="-.1">8</text>
<text x="644.9" y="524.3" font-size="10.6" font-weight="bold" font-style="italic" fill="#fff" stroke="#161616" stroke-width="1.4" paint-order="stroke" text-anchor="middle" letter-spacing="-.1">8</text>
<svg x="655.0" y="510.6" width="28.8" height="20.1" viewBox="120 180 580 405" overflow="visible" style="--b:#141414;--s:#6b1c4c;--r:#b22222;--sw:10"><use href="#car"/><text x="0" y="0" font-size="74" font-weight="bold" fill="#fff" stroke="#fff" stroke-width="5" text-anchor="middle" transform="matrix(0.93,0.37,-0.5,0.85,240,446)">40</text></svg>
<text x="687.8" y="523.6" font-size="8.3" font-weight="bold" fill="#0a0a0a" stroke="#0a0a0a" stroke-width=".8" stroke-linejoin="miter" textLength="31.5" lengthAdjust="spacingAndGlyphs">PSYCHO</text>
<text x="811" y="525.7" font-size="15" font-weight="bold" font-style="italic" fill="#0a0a0a" stroke="#0a0a0a" stroke-width=".5" text-anchor="end" letter-spacing="-.3">8</text>
<text x="813" y="524.8" font-size="8" font-weight="bold" font-style="italic" fill="#111" textLength="15" lengthAdjust="spacingAndGlyphs">PTS</text>
<text x="626.2" y="544.3" font-size="10.6" font-weight="bold" font-style="italic" fill="#0c0c0c" text-anchor="middle">12</text>
<text x="644.2" y="544.9" font-size="10.6" font-weight="bold" font-style="italic" fill="#161616" stroke="#161616" stroke-width="1.3" text-anchor="middle" letter-spacing="-.1">17</text>
<text x="644.9" y="544.3" font-size="10.6" font-weight="bold" font-style="italic" fill="#fff" stroke="#161616" stroke-width="1.4" paint-order="stroke" text-anchor="middle" letter-spacing="-.1">17</text>
<svg x="655.0" y="530.6" width="28.8" height="20.1" viewBox="120 180 580 405" overflow="visible" style="--b:#1c2c6c;--s:#e94c6c;--r:#151515;--sw:10"><use href="#car"/><text x="0" y="0" font-size="74" font-weight="bold" fill="#fff" stroke="#fff" stroke-width="5" text-anchor="middle" transform="matrix(0.93,0.37,-0.5,0.85,240,446)">53</text></svg>
<text x="687.8" y="543.6" font-size="8.3" font-weight="bold" fill="#0a0a0a" stroke="#0a0a0a" stroke-width=".8" stroke-linejoin="miter" textLength="56.5" lengthAdjust="spacingAndGlyphs">BARMY ARMY</text>
<text x="811" y="545.7" font-size="15" font-weight="bold" font-style="italic" fill="#0a0a0a" stroke="#0a0a0a" stroke-width=".5" text-anchor="end" letter-spacing="-.3">6</text>
<text x="813" y="544.8" font-size="8" font-weight="bold" font-style="italic" fill="#111" textLength="15" lengthAdjust="spacingAndGlyphs">PTS</text>
<text x="626.2" y="564.3" font-size="10.6" font-weight="bold" font-style="italic" fill="#0c0c0c" text-anchor="middle">13</text>
<text x="644.2" y="564.9" font-size="10.6" font-weight="bold" font-style="italic" fill="#161616" stroke="#161616" stroke-width="1.3" text-anchor="middle" letter-spacing="-.1">10</text>
<text x="644.9" y="564.3" font-size="10.6" font-weight="bold" font-style="italic" fill="#fff" stroke="#161616" stroke-width="1.4" paint-order="stroke" text-anchor="middle" letter-spacing="-.1">10</text>
<svg x="655.0" y="550.6" width="28.8" height="20.1" viewBox="120 180 580 405" overflow="visible" style="--b:#c93232;--s:#e27272;--r:#e6c81c;--sw:10"><use href="#car"/><text x="0" y="0" font-size="74" font-weight="bold" fill="#fff" stroke="#fff" stroke-width="5" text-anchor="middle" transform="matrix(0.93,0.37,-0.5,0.85,240,446)">69</text></svg>
<text x="687.8" y="563.6" font-size="8.3" font-weight="bold" fill="#0a0a0a" stroke="#0a0a0a" stroke-width=".8" stroke-linejoin="miter" textLength="68.4" lengthAdjust="spacingAndGlyphs">PASSION WAGON</text>
<text x="811" y="565.7" font-size="15" font-weight="bold" font-style="italic" fill="#0a0a0a" stroke="#0a0a0a" stroke-width=".5" text-anchor="end" letter-spacing="-.3">6</text>
<text x="813" y="564.8" font-size="8" font-weight="bold" font-style="italic" fill="#111" textLength="15" lengthAdjust="spacingAndGlyphs">PTS</text>
<text x="626.2" y="584.3" font-size="10.6" font-weight="bold" font-style="italic" fill="#0c0c0c" text-anchor="middle">14</text>
<text x="644.2" y="584.9" font-size="10.6" font-weight="bold" font-style="italic" fill="#161616" stroke="#161616" stroke-width="1.3" text-anchor="middle" letter-spacing="-.1">11</text>
<text x="644.9" y="584.3" font-size="10.6" font-weight="bold" font-style="italic" fill="#fff" stroke="#161616" stroke-width="1.4" paint-order="stroke" text-anchor="middle" letter-spacing="-.1">11</text>
<svg x="655.0" y="570.6" width="28.8" height="20.1" viewBox="120 180 580 405" overflow="visible" style="--b:#7fcbe8;--s:#f2f2f2;--r:#ffffff;--sw:10"><use href="#car"/><text x="0" y="0" font-size="74" font-weight="bold" fill="#fff" stroke="#fff" stroke-width="5" text-anchor="middle" transform="matrix(0.93,0.37,-0.5,0.85,240,446)">88</text></svg>
<text x="687.8" y="583.6" font-size="8.3" font-weight="bold" fill="#0a0a0a" stroke="#0a0a0a" stroke-width=".8" stroke-linejoin="miter" textLength="56.5" lengthAdjust="spacingAndGlyphs">THE BOUNCER</text>
<text x="811" y="585.7" font-size="15" font-weight="bold" font-style="italic" fill="#0a0a0a" stroke="#0a0a0a" stroke-width=".5" text-anchor="end" letter-spacing="-.3">6</text>
<text x="813" y="584.8" font-size="8" font-weight="bold" font-style="italic" fill="#111" textLength="15" lengthAdjust="spacingAndGlyphs">PTS</text>
<text x="626.2" y="604.3" font-size="10.6" font-weight="bold" font-style="italic" fill="#0c0c0c" text-anchor="middle">15</text>
<text x="644.2" y="604.9" font-size="10.6" font-weight="bold" font-style="italic" fill="#161616" stroke="#161616" stroke-width="1.3" text-anchor="middle" letter-spacing="-.1">16</text>
<text x="644.9" y="604.3" font-size="10.6" font-weight="bold" font-style="italic" fill="#fff" stroke="#161616" stroke-width="1.4" paint-order="stroke" text-anchor="middle" letter-spacing="-.1">16</text>
<svg x="655.0" y="590.6" width="28.8" height="20.1" viewBox="120 180 580 405" overflow="visible" style="--b:#f4f4f4;--s:#8b4caa;--r:#b22222;--sw:10"><use href="#car"/><text x="0" y="0" font-size="74" font-weight="bold" fill="#111" stroke="#111" stroke-width="5" text-anchor="middle" transform="matrix(0.93,0.37,-0.5,0.85,240,446)">22</text></svg>
<text x="687.8" y="603.6" font-size="8.3" font-weight="bold" fill="#0a0a0a" stroke="#0a0a0a" stroke-width=".8" stroke-linejoin="miter" textLength="63.6" lengthAdjust="spacingAndGlyphs">CRUNCH BUNCH</text>
<text x="811" y="605.7" font-size="15" font-weight="bold" font-style="italic" fill="#0a0a0a" stroke="#0a0a0a" stroke-width=".5" text-anchor="end" letter-spacing="-.3">4</text>
<text x="813" y="604.8" font-size="8" font-weight="bold" font-style="italic" fill="#111" textLength="15" lengthAdjust="spacingAndGlyphs">PTS</text>
<text x="626.2" y="624.3" font-size="10.6" font-weight="bold" font-style="italic" fill="#0c0c0c" text-anchor="middle">16</text>
<text x="644.2" y="624.9" font-size="10.6" font-weight="bold" font-style="italic" fill="#161616" stroke="#161616" stroke-width="1.3" text-anchor="middle" letter-spacing="-.1">15</text>
<text x="644.9" y="624.3" font-size="10.6" font-weight="bold" font-style="italic" fill="#fff" stroke="#161616" stroke-width="1.4" paint-order="stroke" text-anchor="middle" letter-spacing="-.1">15</text>
<svg x="655.0" y="610.6" width="28.8" height="20.1" viewBox="120 180 580 405" overflow="visible" style="--b:#1c5c2c;--s:#da921c;--r:#151515;--sw:10"><use href="#car"/><text x="0" y="0" font-size="74" font-weight="bold" fill="#fff" stroke="#fff" stroke-width="5" text-anchor="middle" transform="matrix(0.93,0.37,-0.5,0.85,240,446)">95</text></svg>
<text x="687.8" y="623.6" font-size="8.3" font-weight="bold" fill="#0a0a0a" stroke="#0a0a0a" stroke-width=".8" stroke-linejoin="miter" textLength="54.3" lengthAdjust="spacingAndGlyphs">THE TAXMAN</text>
<text x="811" y="625.7" font-size="15" font-weight="bold" font-style="italic" fill="#0a0a0a" stroke="#0a0a0a" stroke-width=".5" text-anchor="end" letter-spacing="-.3">4</text>
<text x="813" y="624.8" font-size="8" font-weight="bold" font-style="italic" fill="#111" textLength="15" lengthAdjust="spacingAndGlyphs">PTS</text>
<text x="626.2" y="644.3" font-size="10.6" font-weight="bold" font-style="italic" fill="#0c0c0c" text-anchor="middle">17</text>
<text x="644.2" y="644.9" font-size="10.6" font-weight="bold" font-style="italic" fill="#161616" stroke="#161616" stroke-width="1.3" text-anchor="middle" letter-spacing="-.1">9</text>
<text x="644.9" y="644.3" font-size="10.6" font-weight="bold" font-style="italic" fill="#fff" stroke="#161616" stroke-width="1.4" paint-order="stroke" text-anchor="middle" letter-spacing="-.1">9</text>
<svg x="655.0" y="630.6" width="28.8" height="20.1" viewBox="120 180 580 405" overflow="visible" style="--b:#474747;--s:#a31a1a;--r:#e6c81c;--sw:10"><use href="#car"/><text x="0" y="0" font-size="74" font-weight="bold" fill="#fff" stroke="#fff" stroke-width="5" text-anchor="middle" transform="matrix(0.93,0.37,-0.5,0.85,240,446)">66</text></svg>
<text x="687.8" y="643.6" font-size="8.3" font-weight="bold" fill="#0a0a0a" stroke="#0a0a0a" stroke-width=".8" stroke-linejoin="miter" textLength="44.3" lengthAdjust="spacingAndGlyphs">THE BEAST</text>
<text x="811" y="645.7" font-size="15" font-weight="bold" font-style="italic" fill="#0a0a0a" stroke="#0a0a0a" stroke-width=".5" text-anchor="end" letter-spacing="-.3">2</text>
<text x="813" y="644.8" font-size="8" font-weight="bold" font-style="italic" fill="#111" textLength="15" lengthAdjust="spacingAndGlyphs">PTS</text>
<text x="626.2" y="664.3" font-size="10.6" font-weight="bold" font-style="italic" fill="#0c0c0c" text-anchor="middle">18</text>
<text x="644.2" y="664.9" font-size="10.6" font-weight="bold" font-style="italic" fill="#161616" stroke="#161616" stroke-width="1.3" text-anchor="middle" letter-spacing="-.1">6</text>
<text x="644.9" y="664.3" font-size="10.6" font-weight="bold" font-style="italic" fill="#fff" stroke="#161616" stroke-width="1.4" paint-order="stroke" text-anchor="middle" letter-spacing="-.1">6</text>
<svg x="655.0" y="650.6" width="28.8" height="20.1" viewBox="120 180 580 405" overflow="visible" style="--b:#141414;--s:#141414;--r:#41c2d2;--sw:10"><use href="#car"/><text x="0" y="0" font-size="74" font-weight="bold" fill="#fff" stroke="#fff" stroke-width="5" text-anchor="middle" transform="matrix(0.93,0.37,-0.5,0.85,240,446)">77</text></svg>
<text x="687.8" y="663.6" font-size="8.3" font-weight="bold" fill="#0a0a0a" stroke="#0a0a0a" stroke-width=".8" stroke-linejoin="miter" textLength="54.9" lengthAdjust="spacingAndGlyphs">UNDERTAKER</text>
<text x="811" y="665.7" font-size="15" font-weight="bold" font-style="italic" fill="#0a0a0a" stroke="#0a0a0a" stroke-width=".5" text-anchor="end" letter-spacing="-.3">2</text>
<text x="813" y="664.8" font-size="8" font-weight="bold" font-style="italic" fill="#111" textLength="15" lengthAdjust="spacingAndGlyphs">PTS</text>
<text x="626.2" y="684.3" font-size="10.6" font-weight="bold" font-style="italic" fill="#0c0c0c" text-anchor="middle">19</text>
<text x="644.2" y="684.9" font-size="10.6" font-weight="bold" font-style="italic" fill="#161616" stroke="#161616" stroke-width="1.3" text-anchor="middle" letter-spacing="-.1">19</text>
<text x="644.9" y="684.3" font-size="10.6" font-weight="bold" font-style="italic" fill="#fff" stroke="#161616" stroke-width="1.4" paint-order="stroke" text-anchor="middle" letter-spacing="-.1">19</text>
<svg x="655.0" y="670.6" width="28.8" height="20.1" viewBox="120 180 580 405" overflow="visible" style="--b:#ececec;--s:#ca2222;--r:#151515;--sw:10"><use href="#car"/><text x="0" y="0" font-size="74" font-weight="bold" fill="#111" stroke="#111" stroke-width="5" text-anchor="middle" transform="matrix(0.93,0.37,-0.5,0.85,240,446)">99</text></svg>
<text x="687.8" y="683.6" font-size="8.3" font-weight="bold" fill="#0a0a0a" stroke="#0a0a0a" stroke-width=".8" stroke-linejoin="miter" textLength="50.1" lengthAdjust="spacingAndGlyphs">THE DOCTOR</text>
<text x="811" y="685.7" font-size="15" font-weight="bold" font-style="italic" fill="#0a0a0a" stroke="#0a0a0a" stroke-width=".5" text-anchor="end" letter-spacing="-.3">0</text>
<text x="813" y="684.8" font-size="8" font-weight="bold" font-style="italic" fill="#111" textLength="15" lengthAdjust="spacingAndGlyphs">PTS</text>
<text x="626.2" y="704.3" font-size="10.6" font-weight="bold" font-style="italic" fill="#0c0c0c" text-anchor="middle">20</text>
<text x="644.2" y="704.9" font-size="10.6" font-weight="bold" font-style="italic" fill="#161616" stroke="#161616" stroke-width="1.3" text-anchor="middle" letter-spacing="-.1">12</text>
<text x="644.9" y="704.3" font-size="10.6" font-weight="bold" font-style="italic" fill="#fff" stroke="#161616" stroke-width="1.4" paint-order="stroke" text-anchor="middle" letter-spacing="-.1">12</text>
<svg x="655.0" y="690.6" width="28.8" height="20.1" viewBox="120 180 580 405" overflow="visible" style="--b:#5b4caa;--s:#f2f2f2;--r:#41c2d2;--sw:10"><use href="#car"/><text x="0" y="0" font-size="74" font-weight="bold" fill="#fff" stroke="#fff" stroke-width="5" text-anchor="middle" transform="matrix(0.93,0.37,-0.5,0.85,240,446)">35</text></svg>
<text x="687.8" y="703.6" font-size="8.3" font-weight="bold" fill="#0a0a0a" stroke="#0a0a0a" stroke-width=".8" stroke-linejoin="miter" textLength="54.9" lengthAdjust="spacingAndGlyphs">THE GODDESS</text>
<text x="811" y="705.7" font-size="15" font-weight="bold" font-style="italic" fill="#0a0a0a" stroke="#0a0a0a" stroke-width=".5" text-anchor="end" letter-spacing="-.3">0</text>
<text x="813" y="704.8" font-size="8" font-weight="bold" font-style="italic" fill="#111" textLength="15" lengthAdjust="spacingAndGlyphs">PTS</text>
</g>
<rect x="862" y="243.6" width="335" height="474.6" fill="#fff" stroke="#101010" stroke-width="1"/>
<g transform="translate(349.4,0)">
<use href="#clsm" transform="translate(533.6,701) rotate(-90) scale(0.966,1.03)" fill="#eeeeee" color="#eeeeee"/>
<use href="#clsm" transform="translate(567.6,704.6) rotate(-90) scale(0.966,1.03)" fill="#eeeeee" color="#eeeeee"/>
<use href="#clsm" transform="translate(549.2,699.8) rotate(-90)" fill="#2b2b2b" color="#2b2b2b"/>
<g transform="translate(526.2,270.0) scale(0.979)"><path d="M40.7 9.6 H71.1 V18 a2.6 2.6 0 0 1 -2.6 2.6 H43.3 a2.6 2.6 0 0 1 -2.6 -2.6 Z" fill="url(#rust)"/><text x="56" y="18.4" font-size="6.5" font-style="italic" fill="#a69cac" text-anchor="middle" textLength="19.3" lengthAdjust="spacingAndGlyphs">derby</text><text x="2.2" y="9.15" font-size="12.8" font-style="italic" fill="#7a3626" stroke="#7a3626" stroke-width=".5" textLength="67" lengthAdjust="spacingAndGlyphs" filter="url(#rustf)">Destruction</text><rect x="0" y="9.07" width="72" height="1.05" fill="#140c0c"/><circle cx="58.6" cy="8.2" r="1.5" fill="none" stroke="#2a1410" stroke-width=".7"/></g>
<rect x="529.8" y="306.2" width="66" height="67.5" rx="6" fill="#fff" stroke="url(#fadeb)" stroke-width="1.9"/>
<rect x="531.3" y="307.6" width="64" height="65" rx="5" fill="none" stroke="url(#fadeb)" stroke-width=".5" opacity=".6"/>
<path d="M564.1 332.4 c-3.5 -5 -7 -7 -11.5 -7 a7 7 0 0 0 0 14 c4.5 0 8 -2 11.5 -7 c3.5 -5 7 -7 11.5 -7 a7 7 0 0 1 0 14 c-4.5 0 -8 -2 -11.5 -7 z" fill="none" stroke="#262626" stroke-width="3.1"/>
<text x="564.3" y="362.9" font-size="8.2" font-weight="bold" fill="#111" stroke="#111" stroke-width=".4" text-anchor="middle">CROSS OVER</text>
<rect x="531" y="382.4" width="66" height="38.8" rx="7" fill="#fff" stroke="#3a3a3a" stroke-width=".9"/>
<g font-size="7.7" font-weight="bold" fill="#111" stroke="#111" stroke-width=".4" text-anchor="middle">
<text x="547.6" y="401.6" textLength="26" lengthAdjust="spacingAndGlyphs">SAISON</text><text x="579.8" y="401.6" textLength="27.5" lengthAdjust="spacingAndGlyphs">COURSE</text>
<text x="547.6" y="413.2" font-size="8.6">1</text><text x="579.8" y="413.2" font-size="8.6">2</text></g>
<rect x="608.1" y="257.1" width="3.2" height="447.6" fill="#000"/>
<rect x="611.2" y="257.1" width="224.9" height="37.8" fill="url(#chk)"/>
<g font-size="5.7" font-weight="bold" fill="#111" stroke="#111" stroke-width=".35">
<text x="621.5" y="305.9" textLength="10" lengthAdjust="spacingAndGlyphs">CLT</text><text x="639" y="305.9" textLength="11.2" lengthAdjust="spacingAndGlyphs">POS</text>
<text x="688" y="305.9" textLength="19.5" lengthAdjust="spacingAndGlyphs">PILOTE</text><text x="802" y="305.4" textLength="21" lengthAdjust="spacingAndGlyphs">POINTS</text></g>
<rect x="656" y="303.2" width="27.3" height="1" fill="#333"/><rect x="711" y="303.2" width="78" height="1" fill="#333"/>
<text x="626.2" y="324.3" font-size="10.6" font-weight="bold" font-style="italic" fill="#0c0c0c" text-anchor="middle">1</text>
<text x="644.2" y="324.9" font-size="10.6" font-weight="bold" font-style="italic" fill="#161616" stroke="#161616" stroke-width="1.3" text-anchor="middle" letter-spacing="-.1">12</text>
<text x="644.9" y="324.3" font-size="10.6" font-weight="bold" font-style="italic" fill="#fff" stroke="#161616" stroke-width="1.4" paint-order="stroke" text-anchor="middle" letter-spacing="-.1">12</text>
<svg x="655.0" y="310.6" width="28.8" height="20.1" viewBox="120 180 580 405" overflow="visible" style="--b:#1c5c2c;--s:#da921c;--r:#151515;--sw:10"><use href="#car"/><text x="0" y="0" font-size="74" font-weight="bold" fill="#fff" stroke="#fff" stroke-width="5" text-anchor="middle" transform="matrix(0.93,0.37,-0.5,0.85,240,446)">95</text></svg>
<text x="687.8" y="323.6" font-size="8.3" font-weight="bold" fill="#0a0a0a" stroke="#0a0a0a" stroke-width=".8" stroke-linejoin="miter" textLength="54.3" lengthAdjust="spacingAndGlyphs">THE TAXMAN</text>
<text x="811" y="325.7" font-size="15" font-weight="bold" font-style="italic" fill="#0a0a0a" stroke="#0a0a0a" stroke-width=".5" text-anchor="end" letter-spacing="-.3">54</text>
<text x="813" y="324.8" font-size="8" font-weight="bold" font-style="italic" fill="#111" textLength="15" lengthAdjust="spacingAndGlyphs">PTS</text>
<text x="626.2" y="344.3" font-size="10.6" font-weight="bold" font-style="italic" fill="#0c0c0c" text-anchor="middle">2</text>
<text x="644.2" y="344.9" font-size="10.6" font-weight="bold" font-style="italic" fill="#161616" stroke="#161616" stroke-width="1.3" text-anchor="middle" letter-spacing="-.1">3</text>
<text x="644.9" y="344.3" font-size="10.6" font-weight="bold" font-style="italic" fill="#fff" stroke="#161616" stroke-width="1.4" paint-order="stroke" text-anchor="middle" letter-spacing="-.1">3</text>
<svg x="655.0" y="330.6" width="28.8" height="20.1" viewBox="120 180 580 405" overflow="visible" style="--b:#aa2a2a;--s:#a02626;--r:#41c2d2;--sw:10"><use href="#car"/><text x="0" y="0" font-size="74" font-weight="bold" fill="#fff" stroke="#fff" stroke-width="5" text-anchor="middle" transform="matrix(0.93,0.37,-0.5,0.85,240,446)">64</text></svg>
<text x="687.8" y="343.6" font-size="8.3" font-weight="bold" fill="#0a0a0a" stroke="#0a0a0a" stroke-width=".8" stroke-linejoin="miter" textLength="54.8" lengthAdjust="spacingAndGlyphs">PYROMANIAC</text>
<text x="811" y="345.7" font-size="15" font-weight="bold" font-style="italic" fill="#0a0a0a" stroke="#0a0a0a" stroke-width=".5" text-anchor="end" letter-spacing="-.3">52</text>
<text x="813" y="344.8" font-size="8" font-weight="bold" font-style="italic" fill="#111" textLength="15" lengthAdjust="spacingAndGlyphs">PTS</text>
<text x="626.2" y="364.3" font-size="10.6" font-weight="bold" font-style="italic" fill="#0c0c0c" text-anchor="middle">3</text>
<text x="644.2" y="364.9" font-size="10.6" font-weight="bold" font-style="italic" fill="#161616" stroke="#161616" stroke-width="1.3" text-anchor="middle" letter-spacing="-.1">5</text>
<text x="644.9" y="364.3" font-size="10.6" font-weight="bold" font-style="italic" fill="#fff" stroke="#161616" stroke-width="1.4" paint-order="stroke" text-anchor="middle" letter-spacing="-.1">5</text>
<svg x="655.0" y="350.6" width="28.8" height="20.1" viewBox="120 180 580 405" overflow="visible" style="--b:#1c1c1c;--s:#4c5c1c;--r:#41c2d2;--sw:10"><use href="#car"/><text x="0" y="0" font-size="74" font-weight="bold" fill="#fff" stroke="#fff" stroke-width="5" text-anchor="middle" transform="matrix(0.93,0.37,-0.5,0.85,240,446)">13</text></svg>
<text x="687.8" y="363.6" font-size="8.3" font-weight="bold" fill="#0a0a0a" stroke="#0a0a0a" stroke-width=".8" stroke-linejoin="miter" textLength="42.4" lengthAdjust="spacingAndGlyphs">THE SKUM</text>
<text x="811" y="365.7" font-size="15" font-weight="bold" font-style="italic" fill="#0a0a0a" stroke="#0a0a0a" stroke-width=".5" text-anchor="end" letter-spacing="-.3">44</text>
<text x="813" y="364.8" font-size="8" font-weight="bold" font-style="italic" fill="#111" textLength="15" lengthAdjust="spacingAndGlyphs">PTS</text>
<text x="626.2" y="384.3" font-size="10.6" font-weight="bold" font-style="italic" fill="#0c0c0c" text-anchor="middle">4</text>
<text x="644.2" y="384.9" font-size="10.6" font-weight="bold" font-style="italic" fill="#161616" stroke="#161616" stroke-width="1.3" text-anchor="middle" letter-spacing="-.1">14</text>
<text x="644.9" y="384.3" font-size="10.6" font-weight="bold" font-style="italic" fill="#fff" stroke="#161616" stroke-width="1.4" paint-order="stroke" text-anchor="middle" letter-spacing="-.1">14</text>
<svg x="655.0" y="370.6" width="28.8" height="20.1" viewBox="120 180 580 405" overflow="visible" style="--b:#5b4caa;--s:#f2f2f2;--r:#41c2d2;--sw:10"><use href="#car"/><text x="0" y="0" font-size="74" font-weight="bold" fill="#fff" stroke="#fff" stroke-width="5" text-anchor="middle" transform="matrix(0.93,0.37,-0.5,0.85,240,446)">35</text></svg>
<text x="687.8" y="383.6" font-size="8.3" font-weight="bold" fill="#0a0a0a" stroke="#0a0a0a" stroke-width=".8" stroke-linejoin="miter" textLength="54.9" lengthAdjust="spacingAndGlyphs">THE GODDESS</text>
<text x="811" y="385.7" font-size="15" font-weight="bold" font-style="italic" fill="#0a0a0a" stroke="#0a0a0a" stroke-width=".5" text-anchor="end" letter-spacing="-.3">40</text>
<text x="813" y="384.8" font-size="8" font-weight="bold" font-style="italic" fill="#111" textLength="15" lengthAdjust="spacingAndGlyphs">PTS</text>
<text x="626.2" y="404.3" font-size="10.6" font-weight="bold" font-style="italic" fill="#0c0c0c" text-anchor="middle">5</text>
<text x="644.2" y="404.9" font-size="10.6" font-weight="bold" font-style="italic" fill="#161616" stroke="#161616" stroke-width="1.3" text-anchor="middle" letter-spacing="-.1">13</text>
<text x="644.9" y="404.3" font-size="10.6" font-weight="bold" font-style="italic" fill="#fff" stroke="#161616" stroke-width="1.4" paint-order="stroke" text-anchor="middle" letter-spacing="-.1">13</text>
<svg x="655.0" y="390.6" width="28.8" height="20.1" viewBox="120 180 580 405" overflow="visible" style="--b:#7b70c6;--s:#b98a1c;--r:#ffffff;--sw:10"><use href="#car"/><text x="0" y="0" font-size="74" font-weight="bold" fill="#fff" stroke="#fff" stroke-width="5" text-anchor="middle" transform="matrix(0.93,0.37,-0.5,0.85,240,446)">7</text></svg>
<text x="687.8" y="403.6" font-size="8.3" font-weight="bold" fill="#0a0a0a" stroke="#0a0a0a" stroke-width=".8" stroke-linejoin="miter" textLength="46.9" lengthAdjust="spacingAndGlyphs">TRASHMAN</text>
<text x="811" y="405.7" font-size="15" font-weight="bold" font-style="italic" fill="#0a0a0a" stroke="#0a0a0a" stroke-width=".5" text-anchor="end" letter-spacing="-.3">40</text>
<text x="813" y="404.8" font-size="8" font-weight="bold" font-style="italic" fill="#111" textLength="15" lengthAdjust="spacingAndGlyphs">PTS</text>
<text x="626.2" y="424.3" font-size="10.6" font-weight="bold" font-style="italic" fill="#0c0c0c" text-anchor="middle">6</text>
<text x="644.2" y="424.9" font-size="10.6" font-weight="bold" font-style="italic" fill="#161616" stroke="#161616" stroke-width="1.3" text-anchor="middle" letter-spacing="-.1">7</text>
<text x="644.9" y="424.3" font-size="10.6" font-weight="bold" font-style="italic" fill="#fff" stroke="#161616" stroke-width="1.4" paint-order="stroke" text-anchor="middle" letter-spacing="-.1">7</text>
<svg x="655.0" y="410.6" width="28.8" height="20.1" viewBox="120 180 580 405" overflow="visible" style="--b:#1c2c6c;--s:#e94c6c;--r:#151515;--sw:10"><use href="#car"/><text x="0" y="0" font-size="74" font-weight="bold" fill="#fff" stroke="#fff" stroke-width="5" text-anchor="middle" transform="matrix(0.93,0.37,-0.5,0.85,240,446)">53</text></svg>
<text x="687.8" y="423.6" font-size="8.3" font-weight="bold" fill="#0a0a0a" stroke="#0a0a0a" stroke-width=".8" stroke-linejoin="miter" textLength="56.5" lengthAdjust="spacingAndGlyphs">BARMY ARMY</text>
<text x="811" y="425.7" font-size="15" font-weight="bold" font-style="italic" fill="#0a0a0a" stroke="#0a0a0a" stroke-width=".5" text-anchor="end" letter-spacing="-.3">38</text>
<text x="813" y="424.8" font-size="8" font-weight="bold" font-style="italic" fill="#111" textLength="15" lengthAdjust="spacingAndGlyphs">PTS</text>
<rect x="615.2" y="433.1" width="215.8" height="14.8" rx="7.4" fill="#9e9e9e"/>
<text x="626.2" y="444.3" font-size="10.6" font-weight="bold" font-style="italic" fill="#0c0c0c" text-anchor="middle">7</text>
<text x="644.2" y="444.9" font-size="10.6" font-weight="bold" font-style="italic" fill="#161616" stroke="#161616" stroke-width="1.3" text-anchor="middle" letter-spacing="-.1">9</text>
<text x="644.9" y="444.3" font-size="10.6" font-weight="bold" font-style="italic" fill="#fff" stroke="#161616" stroke-width="1.4" paint-order="stroke" text-anchor="middle" letter-spacing="-.1">9</text>
<svg x="655.0" y="430.6" width="28.8" height="20.1" viewBox="120 180 580 405" overflow="visible" style="--b:#1c4c7c;--s:#6cdad2;--r:#ffffff;--sw:10"><use href="#car"/><text x="0" y="0" font-size="74" font-weight="bold" fill="#fff" stroke="#fff" stroke-width="5" text-anchor="middle" transform="matrix(0.93,0.37,-0.5,0.85,240,446)">01</text></svg>
<text x="687.8" y="443.6" font-size="8.3" font-weight="bold" fill="#0a0a0a" stroke="#0a0a0a" stroke-width=".8" stroke-linejoin="miter" textLength="20.2" lengthAdjust="spacingAndGlyphs">ALEX</text>
<text x="811" y="445.7" font-size="15" font-weight="bold" font-style="italic" fill="#0a0a0a" stroke="#0a0a0a" stroke-width=".5" text-anchor="end" letter-spacing="-.3">36</text>
<text x="813" y="444.8" font-size="8" font-weight="bold" font-style="italic" fill="#111" textLength="15" lengthAdjust="spacingAndGlyphs">PTS</text>
<text x="626.2" y="464.3" font-size="10.6" font-weight="bold" font-style="italic" fill="#0c0c0c" text-anchor="middle">8</text>
<text x="644.2" y="464.9" font-size="10.6" font-weight="bold" font-style="italic" fill="#161616" stroke="#161616" stroke-width="1.3" text-anchor="middle" letter-spacing="-.1">20</text>
<text x="644.9" y="464.3" font-size="10.6" font-weight="bold" font-style="italic" fill="#fff" stroke="#161616" stroke-width="1.4" paint-order="stroke" text-anchor="middle" letter-spacing="-.1">20</text>
<svg x="655.0" y="450.6" width="28.8" height="20.1" viewBox="120 180 580 405" overflow="visible" style="--b:#f8f0a2;--s:#f2f2f2;--r:#b22222;--sw:10"><use href="#car"/><text x="0" y="0" font-size="74" font-weight="bold" fill="#111" stroke="#111" stroke-width="5" text-anchor="middle" transform="matrix(0.93,0.37,-0.5,0.85,240,446)">37</text></svg>
<text x="687.8" y="463.6" font-size="8.3" font-weight="bold" fill="#0a0a0a" stroke="#0a0a0a" stroke-width=".8" stroke-linejoin="miter" textLength="70.5" lengthAdjust="spacingAndGlyphs">LEARNER DRIVER</text>
<text x="811" y="465.7" font-size="15" font-weight="bold" font-style="italic" fill="#0a0a0a" stroke="#0a0a0a" stroke-width=".5" text-anchor="end" letter-spacing="-.3">34</text>
<text x="813" y="464.8" font-size="8" font-weight="bold" font-style="italic" fill="#111" textLength="15" lengthAdjust="spacingAndGlyphs">PTS</text>
<text x="626.2" y="484.3" font-size="10.6" font-weight="bold" font-style="italic" fill="#0c0c0c" text-anchor="middle">9</text>
<text x="644.2" y="484.9" font-size="10.6" font-weight="bold" font-style="italic" fill="#161616" stroke="#161616" stroke-width="1.3" text-anchor="middle" letter-spacing="-.1">1</text>
<text x="644.9" y="484.3" font-size="10.6" font-weight="bold" font-style="italic" fill="#fff" stroke="#161616" stroke-width="1.4" paint-order="stroke" text-anchor="middle" letter-spacing="-.1">1</text>
<svg x="655.0" y="470.6" width="28.8" height="20.1" viewBox="120 180 580 405" overflow="visible" style="--b:#474747;--s:#a31a1a;--r:#e6c81c;--sw:10"><use href="#car"/><text x="0" y="0" font-size="74" font-weight="bold" fill="#fff" stroke="#fff" stroke-width="5" text-anchor="middle" transform="matrix(0.93,0.37,-0.5,0.85,240,446)">66</text></svg>
<text x="687.8" y="483.6" font-size="8.3" font-weight="bold" fill="#0a0a0a" stroke="#0a0a0a" stroke-width=".8" stroke-linejoin="miter" textLength="44.3" lengthAdjust="spacingAndGlyphs">THE BEAST</text>
<text x="811" y="485.7" font-size="15" font-weight="bold" font-style="italic" fill="#0a0a0a" stroke="#0a0a0a" stroke-width=".5" text-anchor="end" letter-spacing="-.3">34</text>
<text x="813" y="484.8" font-size="8" font-weight="bold" font-style="italic" fill="#111" textLength="15" lengthAdjust="spacingAndGlyphs">PTS</text>
<text x="626.2" y="504.3" font-size="10.6" font-weight="bold" font-style="italic" fill="#0c0c0c" text-anchor="middle">10</text>
<text x="644.2" y="504.9" font-size="10.6" font-weight="bold" font-style="italic" fill="#161616" stroke="#161616" stroke-width="1.3" text-anchor="middle" letter-spacing="-.1">11</text>
<text x="644.9" y="504.3" font-size="10.6" font-weight="bold" font-style="italic" fill="#fff" stroke="#161616" stroke-width="1.4" paint-order="stroke" text-anchor="middle" letter-spacing="-.1">11</text>
<svg x="655.0" y="490.6" width="28.8" height="20.1" viewBox="120 180 580 405" overflow="visible" style="--b:#ececec;--s:#ca2222;--r:#151515;--sw:10"><use href="#car"/><text x="0" y="0" font-size="74" font-weight="bold" fill="#111" stroke="#111" stroke-width="5" text-anchor="middle" transform="matrix(0.93,0.37,-0.5,0.85,240,446)">99</text></svg>
<text x="687.8" y="503.6" font-size="8.3" font-weight="bold" fill="#0a0a0a" stroke="#0a0a0a" stroke-width=".8" stroke-linejoin="miter" textLength="50.1" lengthAdjust="spacingAndGlyphs">THE DOCTOR</text>
<text x="811" y="505.7" font-size="15" font-weight="bold" font-style="italic" fill="#0a0a0a" stroke="#0a0a0a" stroke-width=".5" text-anchor="end" letter-spacing="-.3">32</text>
<text x="813" y="504.8" font-size="8" font-weight="bold" font-style="italic" fill="#111" textLength="15" lengthAdjust="spacingAndGlyphs">PTS</text>
<text x="626.2" y="524.3" font-size="10.6" font-weight="bold" font-style="italic" fill="#0c0c0c" text-anchor="middle">11</text>
<text x="644.2" y="524.9" font-size="10.6" font-weight="bold" font-style="italic" fill="#161616" stroke="#161616" stroke-width="1.3" text-anchor="middle" letter-spacing="-.1">9</text>
<text x="644.9" y="524.3" font-size="10.6" font-weight="bold" font-style="italic" fill="#fff" stroke="#161616" stroke-width="1.4" paint-order="stroke" text-anchor="middle" letter-spacing="-.1">9</text>
<svg x="655.0" y="510.6" width="28.8" height="20.1" viewBox="120 180 580 405" overflow="visible" style="--b:#141414;--s:#6b1c4c;--r:#b22222;--sw:10"><use href="#car"/><text x="0" y="0" font-size="74" font-weight="bold" fill="#fff" stroke="#fff" stroke-width="5" text-anchor="middle" transform="matrix(0.93,0.37,-0.5,0.85,240,446)">40</text></svg>
<text x="687.8" y="523.6" font-size="8.3" font-weight="bold" fill="#0a0a0a" stroke="#0a0a0a" stroke-width=".8" stroke-linejoin="miter" textLength="31.5" lengthAdjust="spacingAndGlyphs">PSYCHO</text>
<text x="811" y="525.7" font-size="15" font-weight="bold" font-style="italic" fill="#0a0a0a" stroke="#0a0a0a" stroke-width=".5" text-anchor="end" letter-spacing="-.3">32</text>
<text x="813" y="524.8" font-size="8" font-weight="bold" font-style="italic" fill="#111" textLength="15" lengthAdjust="spacingAndGlyphs">PTS</text>
<text x="626.2" y="544.3" font-size="10.6" font-weight="bold" font-style="italic" fill="#0c0c0c" text-anchor="middle">12</text>
<text x="644.2" y="544.9" font-size="10.6" font-weight="bold" font-style="italic" fill="#161616" stroke="#161616" stroke-width="1.3" text-anchor="middle" letter-spacing="-.1">15</text>
<text x="644.9" y="544.3" font-size="10.6" font-weight="bold" font-style="italic" fill="#fff" stroke="#161616" stroke-width="1.4" paint-order="stroke" text-anchor="middle" letter-spacing="-.1">15</text>
<svg x="655.0" y="530.6" width="28.8" height="20.1" viewBox="120 180 580 405" overflow="visible" style="--b:#f4f4f4;--s:#8b4caa;--r:#b22222;--sw:10"><use href="#car"/><text x="0" y="0" font-size="74" font-weight="bold" fill="#111" stroke="#111" stroke-width="5" text-anchor="middle" transform="matrix(0.93,0.37,-0.5,0.85,240,446)">22</text></svg>
<text x="687.8" y="543.6" font-size="8.3" font-weight="bold" fill="#0a0a0a" stroke="#0a0a0a" stroke-width=".8" stroke-linejoin="miter" textLength="63.6" lengthAdjust="spacingAndGlyphs">CRUNCH BUNCH</text>
<text x="811" y="545.7" font-size="15" font-weight="bold" font-style="italic" fill="#0a0a0a" stroke="#0a0a0a" stroke-width=".5" text-anchor="end" letter-spacing="-.3">30</text>
<text x="813" y="544.8" font-size="8" font-weight="bold" font-style="italic" fill="#111" textLength="15" lengthAdjust="spacingAndGlyphs">PTS</text>
<text x="626.2" y="564.3" font-size="10.6" font-weight="bold" font-style="italic" fill="#0c0c0c" text-anchor="middle">13</text>
<text x="644.2" y="564.9" font-size="10.6" font-weight="bold" font-style="italic" fill="#161616" stroke="#161616" stroke-width="1.3" text-anchor="middle" letter-spacing="-.1">8</text>
<text x="644.9" y="564.3" font-size="10.6" font-weight="bold" font-style="italic" fill="#fff" stroke="#161616" stroke-width="1.4" paint-order="stroke" text-anchor="middle" letter-spacing="-.1">8</text>
<svg x="655.0" y="550.6" width="28.8" height="20.1" viewBox="120 180 580 405" overflow="visible" style="--b:#c93232;--s:#e27272;--r:#e6c81c;--sw:10"><use href="#car"/><text x="0" y="0" font-size="74" font-weight="bold" fill="#fff" stroke="#fff" stroke-width="5" text-anchor="middle" transform="matrix(0.93,0.37,-0.5,0.85,240,446)">69</text></svg>
<text x="687.8" y="563.6" font-size="8.3" font-weight="bold" fill="#0a0a0a" stroke="#0a0a0a" stroke-width=".8" stroke-linejoin="miter" textLength="68.4" lengthAdjust="spacingAndGlyphs">PASSION WAGON</text>
<text x="811" y="565.7" font-size="15" font-weight="bold" font-style="italic" fill="#0a0a0a" stroke="#0a0a0a" stroke-width=".5" text-anchor="end" letter-spacing="-.3">28</text>
<text x="813" y="564.8" font-size="8" font-weight="bold" font-style="italic" fill="#111" textLength="15" lengthAdjust="spacingAndGlyphs">PTS</text>
<text x="626.2" y="584.3" font-size="10.6" font-weight="bold" font-style="italic" fill="#0c0c0c" text-anchor="middle">14</text>
<text x="644.2" y="584.9" font-size="10.6" font-weight="bold" font-style="italic" fill="#161616" stroke="#161616" stroke-width="1.3" text-anchor="middle" letter-spacing="-.1">17</text>
<text x="644.9" y="584.3" font-size="10.6" font-weight="bold" font-style="italic" fill="#fff" stroke="#161616" stroke-width="1.4" paint-order="stroke" text-anchor="middle" letter-spacing="-.1">17</text>
<svg x="655.0" y="570.6" width="28.8" height="20.1" viewBox="120 180 580 405" overflow="visible" style="--b:#4c4c9a;--s:#8a8a8a;--r:#b22222;--sw:10"><use href="#car"/><text x="0" y="0" font-size="74" font-weight="bold" fill="#fff" stroke="#fff" stroke-width="5" text-anchor="middle" transform="matrix(0.93,0.37,-0.5,0.85,240,446)">52</text></svg>
<text x="687.8" y="583.6" font-size="8.3" font-weight="bold" fill="#0a0a0a" stroke="#0a0a0a" stroke-width=".8" stroke-linejoin="miter" textLength="82.1" lengthAdjust="spacingAndGlyphs">HEAVY METAL HERO</text>
<text x="811" y="585.7" font-size="15" font-weight="bold" font-style="italic" fill="#0a0a0a" stroke="#0a0a0a" stroke-width=".5" text-anchor="end" letter-spacing="-.3">26</text>
<text x="813" y="584.8" font-size="8" font-weight="bold" font-style="italic" fill="#111" textLength="15" lengthAdjust="spacingAndGlyphs">PTS</text>
<text x="626.2" y="604.3" font-size="10.6" font-weight="bold" font-style="italic" fill="#0c0c0c" text-anchor="middle">15</text>
<text x="644.2" y="604.9" font-size="10.6" font-weight="bold" font-style="italic" fill="#161616" stroke="#161616" stroke-width="1.3" text-anchor="middle" letter-spacing="-.1">13</text>
<text x="644.9" y="604.3" font-size="10.6" font-weight="bold" font-style="italic" fill="#fff" stroke="#161616" stroke-width="1.4" paint-order="stroke" text-anchor="middle" letter-spacing="-.1">13</text>
<svg x="655.0" y="590.6" width="28.8" height="20.1" viewBox="120 180 580 405" overflow="visible" style="--b:#141414;--s:#141414;--r:#41c2d2;--sw:10"><use href="#car"/><text x="0" y="0" font-size="74" font-weight="bold" fill="#fff" stroke="#fff" stroke-width="5" text-anchor="middle" transform="matrix(0.93,0.37,-0.5,0.85,240,446)">77</text></svg>
<text x="687.8" y="603.6" font-size="8.3" font-weight="bold" fill="#0a0a0a" stroke="#0a0a0a" stroke-width=".8" stroke-linejoin="miter" textLength="54.9" lengthAdjust="spacingAndGlyphs">UNDERTAKER</text>
<text x="811" y="605.7" font-size="15" font-weight="bold" font-style="italic" fill="#0a0a0a" stroke="#0a0a0a" stroke-width=".5" text-anchor="end" letter-spacing="-.3">26</text>
<text x="813" y="604.8" font-size="8" font-weight="bold" font-style="italic" fill="#111" textLength="15" lengthAdjust="spacingAndGlyphs">PTS</text>
<text x="626.2" y="624.3" font-size="10.6" font-weight="bold" font-style="italic" fill="#0c0c0c" text-anchor="middle">16</text>
<text x="644.2" y="624.9" font-size="10.6" font-weight="bold" font-style="italic" fill="#161616" stroke="#161616" stroke-width="1.3" text-anchor="middle" letter-spacing="-.1">2</text>
<text x="644.9" y="624.3" font-size="10.6" font-weight="bold" font-style="italic" fill="#fff" stroke="#161616" stroke-width="1.4" paint-order="stroke" text-anchor="middle" letter-spacing="-.1">2</text>
<svg x="655.0" y="610.6" width="28.8" height="20.1" viewBox="120 180 580 405" overflow="visible" style="--b:#f5a9b2;--s:#ececec;--r:#e6c81c;--sw:10"><use href="#car"/><text x="0" y="0" font-size="74" font-weight="bold" fill="#fff" stroke="#fff" stroke-width="5" text-anchor="middle" transform="matrix(0.93,0.37,-0.5,0.85,240,446)">23</text></svg>
<text x="687.8" y="623.6" font-size="8.3" font-weight="bold" fill="#0a0a0a" stroke="#0a0a0a" stroke-width=".8" stroke-linejoin="miter" textLength="37" lengthAdjust="spacingAndGlyphs">THE IDOL</text>
<text x="811" y="625.7" font-size="15" font-weight="bold" font-style="italic" fill="#0a0a0a" stroke="#0a0a0a" stroke-width=".5" text-anchor="end" letter-spacing="-.3">16</text>
<text x="813" y="624.8" font-size="8" font-weight="bold" font-style="italic" fill="#111" textLength="15" lengthAdjust="spacingAndGlyphs">PTS</text>
<text x="626.2" y="644.3" font-size="10.6" font-weight="bold" font-style="italic" fill="#0c0c0c" text-anchor="middle">17</text>
<text x="644.2" y="644.9" font-size="10.6" font-weight="bold" font-style="italic" fill="#161616" stroke="#161616" stroke-width="1.3" text-anchor="middle" letter-spacing="-.1">10</text>
<text x="644.9" y="644.3" font-size="10.6" font-weight="bold" font-style="italic" fill="#fff" stroke="#161616" stroke-width="1.4" paint-order="stroke" text-anchor="middle" letter-spacing="-.1">10</text>
<svg x="655.0" y="630.6" width="28.8" height="20.1" viewBox="120 180 580 405" overflow="visible" style="--b:#3f7d38;--s:#f2f2f2;--r:#e6c81c;--sw:10"><use href="#car"/><text x="0" y="0" font-size="74" font-weight="bold" fill="#fff" stroke="#fff" stroke-width="5" text-anchor="middle" transform="matrix(0.93,0.37,-0.5,0.85,240,446)">47</text></svg>
<text x="687.8" y="643.6" font-size="8.3" font-weight="bold" fill="#0a0a0a" stroke="#0a0a0a" stroke-width=".8" stroke-linejoin="miter" textLength="56.9" lengthAdjust="spacingAndGlyphs">THE OPTICIAN</text>
<text x="811" y="645.7" font-size="15" font-weight="bold" font-style="italic" fill="#0a0a0a" stroke="#0a0a0a" stroke-width=".5" text-anchor="end" letter-spacing="-.3">16</text>
<text x="813" y="644.8" font-size="8" font-weight="bold" font-style="italic" fill="#111" textLength="15" lengthAdjust="spacingAndGlyphs">PTS</text>
<text x="626.2" y="664.3" font-size="10.6" font-weight="bold" font-style="italic" fill="#0c0c0c" text-anchor="middle">18</text>
<text x="644.2" y="664.9" font-size="10.6" font-weight="bold" font-style="italic" fill="#161616" stroke="#161616" stroke-width="1.3" text-anchor="middle" letter-spacing="-.1">16</text>
<text x="644.9" y="664.3" font-size="10.6" font-weight="bold" font-style="italic" fill="#fff" stroke="#161616" stroke-width="1.4" paint-order="stroke" text-anchor="middle" letter-spacing="-.1">16</text>
<svg x="655.0" y="650.6" width="28.8" height="20.1" viewBox="120 180 580 405" overflow="visible" style="--b:#4cbaca;--s:#aa2222;--r:#151515;--sw:10"><use href="#car"/><text x="0" y="0" font-size="74" font-weight="bold" fill="#fff" stroke="#fff" stroke-width="5" text-anchor="middle" transform="matrix(0.93,0.37,-0.5,0.85,240,446)">82</text></svg>
<text x="687.8" y="663.6" font-size="8.3" font-weight="bold" fill="#0a0a0a" stroke="#0a0a0a" stroke-width=".8" stroke-linejoin="miter" textLength="60.8" lengthAdjust="spacingAndGlyphs">SUICIDE SQUAD</text>
<text x="811" y="665.7" font-size="15" font-weight="bold" font-style="italic" fill="#0a0a0a" stroke="#0a0a0a" stroke-width=".5" text-anchor="end" letter-spacing="-.3">14</text>
<text x="813" y="664.8" font-size="8" font-weight="bold" font-style="italic" fill="#111" textLength="15" lengthAdjust="spacingAndGlyphs">PTS</text>
<text x="626.2" y="684.3" font-size="10.6" font-weight="bold" font-style="italic" fill="#0c0c0c" text-anchor="middle">19</text>
<text x="644.2" y="684.9" font-size="10.6" font-weight="bold" font-style="italic" fill="#161616" stroke="#161616" stroke-width="1.3" text-anchor="middle" letter-spacing="-.1">6</text>
<text x="644.9" y="684.3" font-size="10.6" font-weight="bold" font-style="italic" fill="#fff" stroke="#161616" stroke-width="1.4" paint-order="stroke" text-anchor="middle" letter-spacing="-.1">6</text>
<svg x="655.0" y="670.6" width="28.8" height="20.1" viewBox="120 180 580 405" overflow="visible" style="--b:#3e4a2c;--s:#3a4528;--r:#ffffff;--sw:10"><use href="#car"/><text x="0" y="0" font-size="74" font-weight="bold" fill="#fff" stroke="#fff" stroke-width="5" text-anchor="middle" transform="matrix(0.93,0.37,-0.5,0.85,240,446)">50</text></svg>
<text x="687.8" y="683.6" font-size="8.3" font-weight="bold" fill="#0a0a0a" stroke="#0a0a0a" stroke-width=".8" stroke-linejoin="miter" textLength="56.3" lengthAdjust="spacingAndGlyphs">THE GENERAL</text>
<text x="811" y="685.7" font-size="15" font-weight="bold" font-style="italic" fill="#0a0a0a" stroke="#0a0a0a" stroke-width=".5" text-anchor="end" letter-spacing="-.3">10</text>
<text x="813" y="684.8" font-size="8" font-weight="bold" font-style="italic" fill="#111" textLength="15" lengthAdjust="spacingAndGlyphs">PTS</text>
<text x="626.2" y="704.3" font-size="10.6" font-weight="bold" font-style="italic" fill="#0c0c0c" text-anchor="middle">20</text>
<text x="644.2" y="704.9" font-size="10.6" font-weight="bold" font-style="italic" fill="#161616" stroke="#161616" stroke-width="1.3" text-anchor="middle" letter-spacing="-.1">4</text>
<text x="644.9" y="704.3" font-size="10.6" font-weight="bold" font-style="italic" fill="#fff" stroke="#161616" stroke-width="1.4" paint-order="stroke" text-anchor="middle" letter-spacing="-.1">4</text>
<svg x="655.0" y="690.6" width="28.8" height="20.1" viewBox="120 180 580 405" overflow="visible" style="--b:#7fcbe8;--s:#f2f2f2;--r:#ffffff;--sw:10"><use href="#car"/><text x="0" y="0" font-size="74" font-weight="bold" fill="#fff" stroke="#fff" stroke-width="5" text-anchor="middle" transform="matrix(0.93,0.37,-0.5,0.85,240,446)">88</text></svg>
<text x="687.8" y="703.6" font-size="8.3" font-weight="bold" fill="#0a0a0a" stroke="#0a0a0a" stroke-width=".8" stroke-linejoin="miter" textLength="56.5" lengthAdjust="spacingAndGlyphs">THE BOUNCER</text>
<text x="811" y="705.7" font-size="15" font-weight="bold" font-style="italic" fill="#0a0a0a" stroke="#0a0a0a" stroke-width=".5" text-anchor="end" letter-spacing="-.3">6</text>
<text x="813" y="704.8" font-size="8" font-weight="bold" font-style="italic" fill="#111" textLength="15" lengthAdjust="spacingAndGlyphs">PTS</text>
</g>
<defs><filter id="pb" x="-5%" y="-5%" width="110%" height="110%"><feGaussianBlur stdDeviation="0.9"/></filter><clipPath id="pc"><rect x="1232" y="239" width="178.2" height="491"/></clipPath></defs>
<rect x="1225.5" y="235" width="184.7" height="500" fill="#3d3d3d"/>
<g clip-path="url(#pc)"><rect x="1232" y="239" width="178.2" height="491" fill="#030306"/><g filter="url(#pb)">
<rect x="1232" y="239" width="178.2" height="491" fill="#030306"/>
<polygon points="1345,304 1360,292 1385,285 1410,281 1410,306 1345,306" fill="#f08a1e"/>
<polygon points="1331,423 1410,423 1410,428.5 1350,428 1338,430" fill="#f08a24"/>
<polygon points="1331,423 1338,424 1330,432 1327,441 1325,434" fill="#e8611a"/>
<polygon points="1352,431 1400,430 1410,431 1410,433 1362,440 1356,437" fill="#f0a060"/>
<polygon points="1334,436 1342,429 1354,431 1358,441 1355,472 1350,478 1343,466 1336,458 1333,446" fill="#aeb2e4"/>
<polygon points="1342,440 1350,438 1352,462 1346,462" fill="#8f95c6"/>
<polygon points="1330,470 1334,462 1343,462 1349,474 1351,490 1350,524 1345,532 1340,520 1333,498 1330,484" fill="#f6b48c"/>
<polygon points="1334,472 1339,468 1343,478 1343,492 1337,488" fill="#e8701a"/>
<polygon points="1340,508 1346,500 1350,510 1350,528 1346,534 1342,524" fill="#e8701a"/>
<polygon points="1350,476 1354,472 1364,500 1370,520 1410,520 1410,637 1387,625.5 1373,607.5 1364,589.5 1354,563 1347.5,535 1350,510" fill="#9fa7e0"/>
<polygon points="1351,500 1358,498 1366,522 1372,540 1384,554 1397,567 1408,583 1410,584 1410,600 1396,590 1380,575 1368,556 1358,530" fill="#b9bbe8"/>
<polygon points="1364,549 1376,552 1388,566 1398,574 1399,583 1388,582 1376,572 1366,560" fill="#8d8998"/>
<polygon points="1351,538 1357,542 1360,556 1355,552" fill="#8d8fb0"/>
<polygon points="1363,503 1410,516 1410,584 1407.5,582 1397,566 1384,552.5 1372,538 1369,520" fill="#f7c6a6"/>
<polygon points="1372,605 1380,610 1395,622 1410,628 1410,637 1387,626 1374,609" fill="#f3b080"/>
<polygon points="1358.5,440.7 1410,429 1410,516 1382,507.5 1354,472" fill="#040308"/>
<polygon points="1378,452 1392,447 1396,455 1396,488 1388,484 1380,470" fill="#f0892c"/>
<polygon points="1396,452 1408,458 1400,466 1410,476 1410,484 1396,480" fill="#5e1c0c"/>
<polygon points="1382,496 1386,494 1400,502 1398,512 1384,506" fill="#b4baf0"/>
<polygon points="1370.5,626 1387,643 1383.5,652 1373,640" fill="#3a4ab8"/>
<polygon points="1393,649 1410,648 1410,655 1393,655" fill="#343ea6"/>
<polygon points="1236,695 1271,674 1297,672.5 1300.5,683 1321,657 1359,645 1371,650 1381.7,669 1388.6,684.6 1410,677.7 1410,720 1236,720" fill="#3b41a8"/>
<polygon points="1238,700 1262,684 1274,706 1268,719 1240,719" fill="#5560c8"/>
<polygon points="1276,700 1290,688 1300,712 1296,719 1274,719" fill="#4a55c0"/>
<polygon points="1306,719 1316,700 1340,684 1362,700 1372,719" fill="#525ecb"/>
<polygon points="1324,664 1352,652 1366,662 1362,690 1340,680 1326,684" fill="#3a44b4"/>
<polygon points="1272,680 1296,676 1298,690 1288,700 1278,694" fill="#2c3190"/>
<polygon points="1378,719 1392,702 1410,700 1410,719" fill="#4a58c8"/>
<polygon points="1388.6,684.6 1410,678.6 1410,693 1400.7,693" fill="#4a58c8"/>
<polygon points="1265,690 1270,688 1268,719 1262,719" fill="#20246e"/>
<polygon points="1235.5,684 1262,658 1270,653.5 1319.5,650 1361,640.5 1362,644 1320,655 1277,661 1267,668.5 1241,697 1235.5,697.5" fill="#f08226"/>
<polygon points="1235.8,705.4 1247,719 1235.8,719" fill="#f09a2a"/>
<rect x="1232" y="719.2" width="178.2" height="2.2" fill="#141a50"/>
<rect x="1232" y="721.4" width="178.2" height="8.6" fill="#1c2f7c"/>
<defs><linearGradient id="pbb" x1="0" x2="1"><stop offset="0" stop-color="#05182c"/><stop offset=".35" stop-color="#0a2a58"/><stop offset="1" stop-color="#1c5ab8"/></linearGradient></defs><rect x="1232" y="726" width="178.2" height="4" fill="url(#pbb)"/>
<rect x="1232" y="725.5" width="22" height="4.3" fill="#4aa0e8"/>
<rect x="1232" y="674" width="2.2" height="56" fill="#3f86e0"/>
</g></g>
</svg>
<div class="abs" style="left:0px;top:0px;width:1440px;height:17px;background:#323232;border-bottom:1px solid #2a2a2a"></div>
<div class="abs" style="left:0px;top:17px;width:1440px;height:19px;background:#353535;"></div>
<div class="abs" style="left:0px;top:36px;width:1440px;height:16.4px;background:#272727;"></div>
<div class="abs" style="left:25px;top:37px;width:121.5px;height:15.4px;background:#373737;"></div>
<div class="abs" style="left:146.5px;top:37px;width:1px;height:15.4px;background:#1f1f1f;"></div>
<div class="abs" style="left:7.8px;top:4px;width:8.2px;height:8.2px;background:#330000;border-radius:1.5px"></div>
<span class="t" style="left:9.0px;top:5.50px;font-size:5.4px;color:#ff9a00;font-weight:bold;letter-spacing:-0.2px">Ai</span>
<svg class="abs" style="left:23.5px;top:3.5px" width="11.5" height="10" viewBox="0 0 23 20"><path d="M11.5 1 L1 10 H4 V19 H9.5 V13 H13.5 V19 H19 V10 H22 Z" fill="#e8e8e8"/></svg>
<div class="abs" style="left:43px;top:2px;width:1px;height:13px;background:#3d3d3d;"></div>
<span class="t" style="left:51.6px;top:4.15px;font-size:7.5px;color:#e2e2e2;letter-spacing:-0.372px;">Fichier</span>
<span class="t" style="left:79.5px;top:4.15px;font-size:7.5px;color:#e2e2e2;letter-spacing:-0.276px;">Edition</span>
<span class="t" style="left:108.5px;top:4.15px;font-size:7.5px;color:#e2e2e2;letter-spacing:-0.285px;">Objet</span>
<span class="t" style="left:133.5px;top:4.15px;font-size:7.5px;color:#e2e2e2;letter-spacing:-0.485px;">Texte</span>
<span class="t" style="left:157.5px;top:4.15px;font-size:7.5px;color:#e2e2e2;letter-spacing:-0.428px;">Sélection</span>
<span class="t" style="left:192.5px;top:4.15px;font-size:7.5px;color:#e2e2e2;letter-spacing:-0.358px;">Effet</span>
<span class="t" style="left:214px;top:4.15px;font-size:7.5px;color:#e2e2e2;letter-spacing:-0.237px;">Affichage</span>
<span class="t" style="left:251.5px;top:4.15px;font-size:7.5px;color:#e2e2e2;letter-spacing:-0.550px;">Fenêtre</span>
<span class="t" style="left:282px;top:4.15px;font-size:7.5px;color:#e2e2e2;letter-spacing:-0.503px;">Aide</span>
<div class="abs" style="left:302px;top:2px;width:1px;height:13px;background:#3a3a3a;"></div>
<div class="abs" style="left:1285px;top:1.8px;width:37px;height:13.5px;border-radius:7px;background:#1473e6"></div>
<span class="t" style="left:1291px;top:5.30px;font-size:6.6px;color:#fff;font-weight:bold;letter-spacing:-0.248px;">Partager</span>
<svg class="abs" style="left:1327px;top:3px" width="11" height="11" viewBox="0 0 22 22"><circle cx="9" cy="9" r="6" fill="none" stroke="#e6e6e6" stroke-width="2.4"/><path d="M13.5 13.5 L19.5 19.5" stroke="#e6e6e6" stroke-width="2.6"/></svg>
<div class="abs" style="left:1344.5px;top:2px;width:1px;height:12px;background:#444;"></div>
<svg class="abs" style="left:1356.5px;top:5px" width="10.5" height="8" viewBox="0 0 21 16"><rect x="0" y="0" width="9" height="16" fill="#ddd"/><rect x="11" y="0" width="10" height="7" fill="#ddd"/><rect x="11" y="9" width="10" height="7" fill="#ddd"/></svg>
<svg class="abs" style="left:1376px;top:4.5px" width="10.5" height="9" viewBox="0 0 21 18"><rect x="1" y="1" width="19" height="16" rx="1.5" fill="none" stroke="#ddd" stroke-width="2"/><rect x="4" y="4" width="3" height="10" fill="#ddd"/></svg>
<div class="abs" style="left:1397.5px;top:6.7px;width:6.5px;height:1.2px;background:#cfcfcf;"></div>
<svg class="abs" style="left:1412.5px;top:2.5px" width="8" height="7" viewBox="0 0 16 14"><rect x="1" y="5" width="9" height="8" rx="1.5" fill="none" stroke="#cfcfcf" stroke-width="1.8"/><path d="M5 5 V2.5 a1.5 1.5 0 0 1 1.5 -1.5 H13.5 a1.5 1.5 0 0 1 1.5 1.5 V8 a1.5 1.5 0 0 1 -1.5 1.5 H10" fill="none" stroke="#cfcfcf" stroke-width="1.8"/></svg>
<svg class="abs" style="left:1428.5px;top:2.5px" width="7" height="7" viewBox="0 0 14 14"><path d="M1.5 1.5 L12.5 12.5 M12.5 1.5 L1.5 12.5" stroke="#d8d8d8" stroke-width="2"/></svg>
<div class="abs" style="left:4.5px;top:19px;width:1px;height:15px;background:#444;"></div>
<span class="t" style="left:10px;top:23.75px;font-size:6.5px;color:#a6a6a6;letter-spacing:-0.467px;">Auc. sélect.</span>
<div class="abs" style="left:55px;top:20.6px;width:11.2px;height:12px;background:#000;border:1px solid #bdbdbd;border-radius:1px"></div>
<svg class="abs" style="left:68.5px;top:25.8px" width="5" height="3.5" viewBox="0 0 10 6"><path d="M1 1 L5 5 L9 1" fill="none" stroke="#cfcfcf" stroke-width="1.8"/></svg>
<svg class="abs" style="left:79.8px;top:20.6px" width="11.4" height="12" viewBox="0 0 23 24"><rect x="0.5" y="0.5" width="22" height="23" fill="#fff" stroke="#bbb"/><path d="M1 23 L22 1" stroke="#e01010" stroke-width="2.6"/><rect x="8.5" y="9" width="6" height="6" fill="none" stroke="#aac" stroke-width="1.2"/></svg>
<svg class="abs" style="left:93.0px;top:25.8px" width="5" height="3.5" viewBox="0 0 10 6"><path d="M1 1 L5 5 L9 1" fill="none" stroke="#cfcfcf" stroke-width="1.8"/></svg>
<span class="t" style="left:108px;top:23.75px;font-size:6.5px;color:#e2e2e2;font-weight:bold;letter-spacing:-0.693px;">Contour :</span>
<svg class="abs" style="left:136.5px;top:21.5px" width="6" height="11" viewBox="0 0 12 22"><path d="M2 8 L6 3.5 L10 8 M2 14 L6 18.5 L10 14" fill="none" stroke="#cfcfcf" stroke-width="1.8"/></svg>
<div class="abs" style="left:146px;top:21px;width:23.5px;height:11.5px;background:#2b2b2b;"></div>
<div class="abs" style="left:170px;top:21px;width:9.5px;height:11.5px;background:#2e2e2e;"></div>
<svg class="abs" style="left:172.1px;top:25.8px" width="5" height="3.5" viewBox="0 0 10 6"><path d="M1 1 L5 5 L9 1" fill="none" stroke="#cfcfcf" stroke-width="1.8"/></svg>
<div class="abs" style="left:183.3px;top:21px;width:51px;height:11.6px;background:#6c6c6c;"></div>
<svg class="abs" style="left:236.5px;top:25.8px" width="5" height="3.5" viewBox="0 0 10 6"><path d="M1 1 L5 5 L9 1" fill="none" stroke="#666" stroke-width="1.8"/></svg>
<div class="abs" style="left:248px;top:21px;width:48.6px;height:11.4px;background:#ebebeb;"></div>
<div class="abs" style="left:252.5px;top:26px;width:2.4px;height:2.4px;background:#111;border-radius:50%"></div>
<span class="t" style="left:261.3px;top:23.75px;font-size:6.5px;color:#222;letter-spacing:-0.342px;">Arrondi 5 pt</span>
<div class="abs" style="left:297px;top:21px;width:9.5px;height:11.5px;background:#2e2e2e;"></div>
<svg class="abs" style="left:299.3px;top:25.8px" width="5" height="3.5" viewBox="0 0 10 6"><path d="M1 1 L5 5 L9 1" fill="none" stroke="#cfcfcf" stroke-width="1.8"/></svg>
<span class="t" style="left:311px;top:23.75px;font-size:6.5px;color:#cfcfcf;letter-spacing:-0.390px;border-bottom:0.6px dotted #999">Opacité :</span>
<div class="abs" style="left:338px;top:21px;width:27px;height:11.5px;background:#2b2b2b;"></div>
<span class="t" style="left:339.5px;top:23.80px;font-size:6.4px;color:#d6d6d6;letter-spacing:-0.642px;">100%</span>
<svg class="abs" style="left:368.5px;top:24px" width="4" height="6.5" viewBox="0 0 8 13"><path d="M1.5 1.5 L6.5 6.5 L1.5 11.5" fill="none" stroke="#ddd" stroke-width="1.8"/></svg>
<span class="t" style="left:379.2px;top:23.75px;font-size:6.5px;color:#9a9a9a;letter-spacing:-0.437px;">Style :</span>
<div class="abs" style="left:398.8px;top:21px;width:11px;height:11.6px;background:#e7e7e7;border:1px solid #cfcfcf"></div>
<div class="abs" style="left:410.5px;top:21px;width:8.5px;height:11.5px;background:#2e2e2e;"></div>
<svg class="abs" style="left:412.2px;top:25.8px" width="5" height="3.5" viewBox="0 0 10 6"><path d="M1 1 L5 5 L9 1" fill="none" stroke="#cfcfcf" stroke-width="1.8"/></svg>
<div class="abs" style="left:423.5px;top:19px;width:1px;height:15px;background:#444;"></div>
<div class="abs" style="left:427.5px;top:21px;width:62.5px;height:11.5px;background:#353535;border:1px solid #4c4c4c;border-radius:1px"></div>
<span class="t" style="left:432.5px;top:23.80px;font-size:6.4px;color:#e8e8e8;letter-spacing:-0.408px;">Format de document</span>
<div class="abs" style="left:492.7px;top:21px;width:40.5px;height:11.5px;background:#353535;border:1px solid #4c4c4c;border-radius:1px"></div>
<span class="t" style="left:498px;top:23.80px;font-size:6.4px;color:#e8e8e8;letter-spacing:-0.528px;">Préférences</span>
<svg class="abs" style="left:538px;top:21.5px" width="10" height="10.5" viewBox="0 0 20 21"><path d="M1 3 H6 M1 8 H4 M1 13 H6 M14 3 H19 M16 8 H19" stroke="#ddd" stroke-width="2"/><path d="M7 5 L16 11 L12 12 L14 17 L12 18 L10 13 L7 15 Z" fill="#e6e6e6"/></svg>
<svg class="abs" style="left:550.8px;top:25.8px" width="5" height="3.5" viewBox="0 0 10 6"><path d="M1 1 L5 5 L9 1" fill="none" stroke="#cfcfcf" stroke-width="1.8"/></svg>
<svg class="abs" style="left:560px;top:20px" width="13" height="13" viewBox="0 0 26 26"><path d="M5 10 V20 a2 2 0 0 0 2 2 H18 a2 2 0 0 0 2 -2 V10" fill="none" stroke="#e6e6e6" stroke-width="2.4"/><rect x="9.5" y="14" width="5.5" height="5" fill="#e6e6e6"/><path d="M19 2 L20.2 5.3 L23.5 6.5 L20.2 7.7 L19 11 L17.8 7.7 L14.5 6.5 L17.8 5.3 Z" fill="#e6e6e6"/><circle cx="6" cy="5" r="4.2" fill="#2b8af5"/></svg>
<svg class="abs" style="left:1383.5px;top:22.5px" width="7" height="7" viewBox="0 0 14 14"><path d="M1 4 V1 H4 M10 1 H13 V4 M13 10 V13 H10 M4 13 H1 V10" fill="none" stroke="#5c5c5c" stroke-width="1.8"/></svg>
<svg class="abs" style="left:1397.5px;top:21.5px" width="10" height="10" viewBox="0 0 20 20"><path d="M2 1 V19" stroke="#e6e6e6" stroke-width="3" stroke-dasharray="3.5 1.8"/><path d="M7 5 H12 a5 5 0 0 1 0 10 H7" fill="none" stroke="#e6e6e6" stroke-width="2.6"/></svg>
<svg class="abs" style="left:1409.2px;top:25.2px" width="5" height="3.5" viewBox="0 0 10 6"><path d="M1 1 L5 5 L9 1" fill="none" stroke="#5a5a5a" stroke-width="1.8"/></svg>
<svg class="abs" style="left:1424.5px;top:23px" width="7.5" height="6" viewBox="0 0 15 12"><rect x="0" y="0" width="4" height="12" fill="#9a9a9a"/><path d="M6 1 H15 M6 4.3 H15 M6 7.6 H15 M6 11 H15" stroke="#9a9a9a" stroke-width="2"/></svg>
<span class="t" style="left:30.5px;top:42.35px;font-size:6.5px;color:#f0f0f0;font-weight:bold;letter-spacing:-0.126px;">DD6.ai @ 66,67 % (CMJN/Aperçu)</span>
<svg class="abs" style="left:138px;top:42.3px" width="5" height="5" viewBox="0 0 10 10"><path d="M1 1 L9 9 M9 1 L1 9" stroke="#e6e6e6" stroke-width="2"/></svg>
<span class="t" style="left:152px;top:42.35px;font-size:6.5px;color:#8f8f8f;letter-spacing:-0.039px;">DD7.ai @ 100 % (CMJN/Aperçu)</span>
<svg class="abs" style="left:254.5px;top:42.3px" width="5" height="5" viewBox="0 0 10 10"><path d="M1 1 L9 9 M9 1 L1 9" stroke="#a0a0a0" stroke-width="1.6"/></svg>
<div class="abs" style="left:0px;top:36px;width:25px;height:736.5px;background:#333333;border-right:1px solid #2a2a2a"></div>
<div class="abs" style="left:0px;top:37px;width:25px;height:5.8px;background:#2a2a2a;"></div>
<div class="abs" style="left:0px;top:36px;width:1.2px;height:736.5px;background:#262626;"></div>
<svg class="abs" style="left:4.3px;top:38px" width="4.6" height="3.6" viewBox="0 0 10 8"><path d="M1 1 L4 4 L1 7 M6 1 L9 4 L6 7" fill="none" stroke="#bdbdbd" stroke-width="1.4"/></svg>
<div class="abs" style="left:7px;top:46px;width:11px;height:1px;background:#3d3d3d;"></div>
<div class="abs" style="left:5.5px;top:54.6px;width:15.2px;height:14px;background:#1d1d1d;border-radius:1.5px"></div>
<svg class="abs" style="left:6.7px;top:54.8px" width="12" height="12" viewBox="0 0 24 24"><path d="M7 3 L7 19 L11 15.5 L13.5 21 L16 20 L13.5 14.5 L18.5 14 Z" fill="none" stroke="#d2d2d2" stroke-width="1.6" stroke-linejoin="round"/></svg>
<svg class="abs" style="left:6.7px;top:68.3px" width="12" height="12" viewBox="0 0 24 24"><path d="M6 3 L6 20 L11 14 L19 14 Z" fill="#d2d2d2"/></svg>
<svg class="abs" style="left:19px;top:78.5px" width="2.2" height="2.2" viewBox="0 0 4 4"><path d="M4 0 V4 H0 Z" fill="#a8a8a8"/></svg>
<svg class="abs" style="left:6.7px;top:81.8px" width="12" height="12" viewBox="0 0 24 24"><path d="M4 20 L14 10" stroke="#d2d2d2" stroke-width="2.4"/><path d="M17 3 V8 M14.5 5.5 H19.5 M20 11 V14 M10 3 V6" stroke="#d2d2d2" stroke-width="1.4"/></svg>
<svg class="abs" style="left:19px;top:92.0px" width="2.2" height="2.2" viewBox="0 0 4 4"><path d="M4 0 V4 H0 Z" fill="#a8a8a8"/></svg>
<svg class="abs" style="left:6.7px;top:95.3px" width="12" height="12" viewBox="0 0 24 24"><path d="M12 4 C5 4 3 8 3 10 C3 13 6 15 9 15 C8 18 6 19 4 19" fill="none" stroke="#d2d2d2" stroke-width="1.6"/><path d="M12 4 C18 4 21 7 21 10" fill="none" stroke="#d2d2d2" stroke-width="1.6"/><path d="M12 9 L12 21 L15 18 L17 22 L19 21 L17 17 L21 16.5 Z" fill="#d2d2d2"/></svg>
<svg class="abs" style="left:19px;top:105.5px" width="2.2" height="2.2" viewBox="0 0 4 4"><path d="M4 0 V4 H0 Z" fill="#a8a8a8"/></svg>
<svg class="abs" style="left:6.7px;top:108.8px" width="12" height="12" viewBox="0 0 24 24"><path d="M4 21 L6 13 L13 5 L19 11 L11 18 Z" fill="#d2d2d2"/><path d="M14 3.5 L20.5 10" stroke="#d2d2d2" stroke-width="2.6"/><circle cx="10" cy="14.5" r="1.6" fill="#333"/></svg>
<svg class="abs" style="left:19px;top:119.0px" width="2.2" height="2.2" viewBox="0 0 4 4"><path d="M4 0 V4 H0 Z" fill="#a8a8a8"/></svg>
<svg class="abs" style="left:6.7px;top:122.3px" width="12" height="12" viewBox="0 0 24 24"><path d="M8 21 L10 14 L16 7 L21 12 L14 18 Z" fill="#d2d2d2"/><path d="M17 5.5 L22.5 11" stroke="#d2d2d2" stroke-width="2.4"/><path d="M3 7 C1 14 3 20 8 21" fill="none" stroke="#d2d2d2" stroke-width="1.6"/></svg>
<svg class="abs" style="left:19px;top:132.5px" width="2.2" height="2.2" viewBox="0 0 4 4"><path d="M4 0 V4 H0 Z" fill="#a8a8a8"/></svg>
<svg class="abs" style="left:6.7px;top:135.8px" width="12" height="12" viewBox="0 0 24 24"><path d="M4 4 H20 V8.5 H18.4 L17.8 6.2 H13.6 V18.6 L16 19.2 V20.5 H8 V19.2 L10.4 18.6 V6.2 H6.2 L5.6 8.5 H4 Z" fill="#d2d2d2"/></svg>
<svg class="abs" style="left:19px;top:146.0px" width="2.2" height="2.2" viewBox="0 0 4 4"><path d="M4 0 V4 H0 Z" fill="#a8a8a8"/></svg>
<svg class="abs" style="left:6.7px;top:149.3px" width="12" height="12" viewBox="0 0 24 24"><path d="M4 20 L20 4" stroke="#d2d2d2" stroke-width="1.8"/></svg>
<svg class="abs" style="left:19px;top:159.5px" width="2.2" height="2.2" viewBox="0 0 4 4"><path d="M4 0 V4 H0 Z" fill="#a8a8a8"/></svg>
<svg class="abs" style="left:6.7px;top:162.8px" width="12" height="12" viewBox="0 0 24 24"><ellipse cx="12" cy="12" rx="9" ry="7" fill="#777" stroke="#d2d2d2" stroke-width="1.5"/></svg>
<svg class="abs" style="left:19px;top:173.0px" width="2.2" height="2.2" viewBox="0 0 4 4"><path d="M4 0 V4 H0 Z" fill="#a8a8a8"/></svg>
<svg class="abs" style="left:6.7px;top:176.3px" width="12" height="12" viewBox="0 0 24 24"><path d="M20 3 L10 13 L13 16 Z" fill="#d2d2d2"/><path d="M9 14 C5 15 6 19 3 21 C8 22 12 20 12 17 Z" fill="#d2d2d2"/></svg>
<svg class="abs" style="left:19px;top:186.5px" width="2.2" height="2.2" viewBox="0 0 4 4"><path d="M4 0 V4 H0 Z" fill="#a8a8a8"/></svg>
<svg class="abs" style="left:6.7px;top:189.8px" width="12" height="12" viewBox="0 0 24 24"><circle cx="8" cy="13" r="6" fill="#777" stroke="#d2d2d2" stroke-width="1.5"/><path d="M9 19 L21 5" stroke="#d2d2d2" stroke-width="3"/></svg>
<svg class="abs" style="left:19px;top:200.0px" width="2.2" height="2.2" viewBox="0 0 4 4"><path d="M4 0 V4 H0 Z" fill="#a8a8a8"/></svg>
<svg class="abs" style="left:6.7px;top:203.3px" width="12" height="12" viewBox="0 0 24 24"><path d="M3 14 L13 4 L21 10 L12 20 H7 Z" fill="#d2d2d2"/><path d="M5.5 12 L13 18" stroke="#333" stroke-width="1.4"/></svg>
<svg class="abs" style="left:19px;top:213.5px" width="2.2" height="2.2" viewBox="0 0 4 4"><path d="M4 0 V4 H0 Z" fill="#a8a8a8"/></svg>
<svg class="abs" style="left:6.7px;top:216.8px" width="12" height="12" viewBox="0 0 24 24"><path d="M12 5 A7.5 7.5 0 1 1 4.5 12.5" fill="none" stroke="#d2d2d2" stroke-width="1.8"/><path d="M12 1.5 L12 8.5 L7.5 5 Z" fill="#d2d2d2"/></svg>
<svg class="abs" style="left:19px;top:227.0px" width="2.2" height="2.2" viewBox="0 0 4 4"><path d="M4 0 V4 H0 Z" fill="#a8a8a8"/></svg>
<svg class="abs" style="left:6.7px;top:230.3px" width="12" height="12" viewBox="0 0 24 24"><rect x="3" y="10" width="11" height="11" fill="none" stroke="#d2d2d2" stroke-width="1.5"/><rect x="9" y="3" width="12" height="12" fill="none" stroke="#d2d2d2" stroke-width="1.5" stroke-dasharray="2.5 1.5"/><path d="M14 10 L19 5 M15.5 5 H19 V8.5" stroke="#d2d2d2" stroke-width="1.4" fill="none"/></svg>
<svg class="abs" style="left:19px;top:240.5px" width="2.2" height="2.2" viewBox="0 0 4 4"><path d="M4 0 V4 H0 Z" fill="#a8a8a8"/></svg>
<svg class="abs" style="left:6.7px;top:243.8px" width="12" height="12" viewBox="0 0 24 24"><path d="M3 16 C7 6 11 20 14 10 C16 5 19 8 21 6" fill="none" stroke="#d2d2d2" stroke-width="1.8"/><path d="M4 20 H20" stroke="#d2d2d2" stroke-width="1.4"/><path d="M9 3 L12 8 L6 8 Z" fill="#d2d2d2"/></svg>
<svg class="abs" style="left:19px;top:254.0px" width="2.2" height="2.2" viewBox="0 0 4 4"><path d="M4 0 V4 H0 Z" fill="#a8a8a8"/></svg>
<svg class="abs" style="left:6.7px;top:257.3px" width="12" height="12" viewBox="0 0 24 24"><rect x="4" y="5" width="15" height="13" fill="none" stroke="#d2d2d2" stroke-width="1.4" stroke-dasharray="2.5 1.5"/><rect x="2.5" y="3.5" width="3" height="3" fill="#d2d2d2"/><rect x="17.5" y="3.5" width="3" height="3" fill="#d2d2d2"/><rect x="2.5" y="16.5" width="3" height="3" fill="#d2d2d2"/><path d="M12 9 L12 21 L15 18.5 L17 22 L19 21 L17 17.5 L21 17 Z" fill="#d2d2d2"/></svg>
<svg class="abs" style="left:19px;top:267.5px" width="2.2" height="2.2" viewBox="0 0 4 4"><path d="M4 0 V4 H0 Z" fill="#a8a8a8"/></svg>
<svg class="abs" style="left:6.7px;top:270.8px" width="12" height="12" viewBox="0 0 24 24"><circle cx="9" cy="9" r="6" fill="none" stroke="#d2d2d2" stroke-width="1.5"/><circle cx="14" cy="12" r="6" fill="none" stroke="#d2d2d2" stroke-width="1.5" stroke-dasharray="2 1.5"/><path d="M13 12 L13 22 L16 19.5 L18 23 L19.5 22 L18 18.5 L21.5 18 Z" fill="#d2d2d2"/></svg>
<svg class="abs" style="left:19px;top:281.0px" width="2.2" height="2.2" viewBox="0 0 4 4"><path d="M4 0 V4 H0 Z" fill="#a8a8a8"/></svg>
<svg class="abs" style="left:6.7px;top:284.3px" width="12" height="12" viewBox="0 0 24 24"><path d="M3 4 L3 20 L20 14 L20 9 Z M3 9.5 L20 11 M3 15 L20 12.5 M9 6 V18 M15 7.5 V16" fill="none" stroke="#d2d2d2" stroke-width="1.3"/></svg>
<svg class="abs" style="left:19px;top:294.5px" width="2.2" height="2.2" viewBox="0 0 4 4"><path d="M4 0 V4 H0 Z" fill="#a8a8a8"/></svg>
<svg class="abs" style="left:6.7px;top:297.8px" width="12" height="12" viewBox="0 0 24 24"><rect x="3" y="4" width="18" height="16" fill="none" stroke="#d2d2d2" stroke-width="1.5"/><path d="M3 12 C8 9 15 15 21 12 M12 4 C9 9 15 15 12 20" fill="none" stroke="#d2d2d2" stroke-width="1.3"/><rect x="5" y="6" width="5" height="4" fill="#999"/><rect x="14" y="14" width="5" height="4" fill="#999"/></svg>
<svg class="abs" style="left:19px;top:308.0px" width="2.2" height="2.2" viewBox="0 0 4 4"><path d="M4 0 V4 H0 Z" fill="#a8a8a8"/></svg>
<svg class="abs" style="left:6.7px;top:311.3px" width="12" height="12" viewBox="0 0 24 24"><defs><linearGradient id="tg" x1="0" x2="1"><stop offset="0" stop-color="#555"/><stop offset="1" stop-color="#eee"/></linearGradient></defs><rect x="3" y="4" width="18" height="16" fill="url(#tg)" stroke="#d2d2d2" stroke-width="1.3"/></svg>
<svg class="abs" style="left:19px;top:321.5px" width="2.2" height="2.2" viewBox="0 0 4 4"><path d="M4 0 V4 H0 Z" fill="#a8a8a8"/></svg>
<svg class="abs" style="left:6.7px;top:324.8px" width="12" height="12" viewBox="0 0 24 24"><path d="M3 21 L5 16 L13 8 L16 11 L8 19 Z" fill="#d2d2d2"/><path d="M12 6 L18 12" stroke="#d2d2d2" stroke-width="2.2"/><path d="M15 9 L19 5" stroke="#d2d2d2" stroke-width="4" stroke-linecap="round"/></svg>
<svg class="abs" style="left:19px;top:335.0px" width="2.2" height="2.2" viewBox="0 0 4 4"><path d="M4 0 V4 H0 Z" fill="#a8a8a8"/></svg>
<svg class="abs" style="left:6.7px;top:338.3px" width="12" height="12" viewBox="0 0 24 24"><path d="M3 21 L5 15 L16 4 L20 8 L9 19 Z" fill="none" stroke="#d2d2d2" stroke-width="1.6"/><path d="M13 7 L17 11" stroke="#d2d2d2" stroke-width="1.4"/></svg>
<svg class="abs" style="left:19px;top:348.5px" width="2.2" height="2.2" viewBox="0 0 4 4"><path d="M4 0 V4 H0 Z" fill="#a8a8a8"/></svg>
<svg class="abs" style="left:6.7px;top:351.8px" width="12" height="12" viewBox="0 0 24 24"><rect x="3" y="4" width="8" height="8" fill="none" stroke="#d2d2d2" stroke-width="1.4"/><circle cx="16" cy="15" r="5" fill="#999" stroke="#d2d2d2" stroke-width="1.4"/><path d="M10 11 L13 13" stroke="#d2d2d2" stroke-width="1.4"/></svg>
<svg class="abs" style="left:19px;top:362.0px" width="2.2" height="2.2" viewBox="0 0 4 4"><path d="M4 0 V4 H0 Z" fill="#a8a8a8"/></svg>
<svg class="abs" style="left:6.7px;top:365.3px" width="12" height="12" viewBox="0 0 24 24"><rect x="9" y="9" width="9" height="12" rx="1.5" fill="none" stroke="#d2d2d2" stroke-width="1.5"/><rect x="11.5" y="5" width="4" height="4" fill="#d2d2d2"/><rect x="3" y="3" width="2.5" height="2.5" fill="#d2d2d2"/><rect x="6" y="7" width="2.5" height="2.5" fill="#d2d2d2"/><rect x="3" y="11" width="2.5" height="2.5" fill="#d2d2d2"/><circle cx="13.5" cy="15" r="2" fill="#d2d2d2"/></svg>
<svg class="abs" style="left:19px;top:375.5px" width="2.2" height="2.2" viewBox="0 0 4 4"><path d="M4 0 V4 H0 Z" fill="#a8a8a8"/></svg>
<svg class="abs" style="left:6.7px;top:378.8px" width="12" height="12" viewBox="0 0 24 24"><path d="M3 3 V21 H21" fill="none" stroke="#d2d2d2" stroke-width="1.5"/><rect x="6" y="11" width="3" height="8" fill="#d2d2d2"/><rect x="11" y="6" width="3" height="13" fill="#d2d2d2"/><rect x="16" y="9" width="3" height="10" fill="#d2d2d2"/></svg>
<svg class="abs" style="left:19px;top:389.0px" width="2.2" height="2.2" viewBox="0 0 4 4"><path d="M4 0 V4 H0 Z" fill="#a8a8a8"/></svg>
<svg class="abs" style="left:6.7px;top:392.3px" width="12" height="12" viewBox="0 0 24 24"><path d="M6 2 V22 M2 6 H22" stroke="#d2d2d2" stroke-width="1.4"/><rect x="6" y="6" width="14" height="13" fill="none" stroke="#d2d2d2" stroke-width="1.6"/></svg>
<svg class="abs" style="left:19px;top:402.5px" width="2.2" height="2.2" viewBox="0 0 4 4"><path d="M4 0 V4 H0 Z" fill="#a8a8a8"/></svg>
<svg class="abs" style="left:6.7px;top:405.8px" width="12" height="12" viewBox="0 0 24 24"><path d="M3 21 L6 13 L17 3 L20 6 L10 17 Z" fill="none" stroke="#d2d2d2" stroke-width="1.6"/><path d="M6 13 L10 17" stroke="#d2d2d2" stroke-width="1.4"/></svg>
<svg class="abs" style="left:19px;top:416.0px" width="2.2" height="2.2" viewBox="0 0 4 4"><path d="M4 0 V4 H0 Z" fill="#a8a8a8"/></svg>
<svg class="abs" style="left:6.7px;top:419.3px" width="12" height="12" viewBox="0 0 24 24"><path d="M7 21 C4 17 3 14 3.5 12 C4.5 11 6 12 7 14 V5.5 a1.4 1.4 0 0 1 2.8 0 V11 V3.8 a1.4 1.4 0 0 1 2.8 0 V11 V4.8 a1.4 1.4 0 0 1 2.8 0 V12 V7.5 a1.3 1.3 0 0 1 2.6 0 V15 C18 19 16 21 15 21 Z" fill="#d2d2d2"/></svg>
<svg class="abs" style="left:19px;top:429.5px" width="2.2" height="2.2" viewBox="0 0 4 4"><path d="M4 0 V4 H0 Z" fill="#a8a8a8"/></svg>
<svg class="abs" style="left:6.7px;top:432.8px" width="12" height="12" viewBox="0 0 24 24"><circle cx="10" cy="10" r="6.5" fill="none" stroke="#d2d2d2" stroke-width="2"/><path d="M15 15 L21 21" stroke="#d2d2d2" stroke-width="2.4"/></svg>
<svg class="abs" style="left:4px;top:447.5px" width="8" height="8" viewBox="0 0 16 16"><rect x="1" y="1" width="8" height="8" fill="#111" stroke="#ddd" stroke-width="1.4"/><rect x="6" y="6" width="8" height="8" fill="#fff" stroke="#ddd" stroke-width="1.4"/><rect x="8.5" y="8.5" width="3" height="3" fill="#333"/></svg>
<svg class="abs" style="left:15px;top:448px" width="8" height="8" viewBox="0 0 16 16"><path d="M3 5 H9 a4 4 0 0 1 4 4 V14" fill="none" stroke="#ddd" stroke-width="1.8"/><path d="M6 1.5 L2 5 L6 8.5 Z M9.5 11 L13 15 L16 11 Z" fill="#ddd"/></svg>
<svg class="abs" style="left:10.4px;top:465.6px" width="11" height="11" viewBox="0 0 22 22"><rect x="1" y="1" width="20" height="20" fill="#fff"/><path d="M1 21 L21 1" stroke="#e01010" stroke-width="3"/><rect x="7" y="7" width="8" height="8" fill="#333"/><path d="M1 21 L21 1" stroke="#e01010" stroke-width="3"/></svg>
<div class="abs" style="left:5px;top:460.2px;width:10.8px;height:10.4px;background:#000;border:1px solid #cfcfcf;border-radius:1px"></div>
<div class="abs" style="left:5.4px;top:480px;width:5px;height:5.2px;background:#000;"></div>
<div class="abs" style="left:10.9px;top:480px;width:4.6px;height:5.2px;background:linear-gradient(90deg,#fff,#888)"></div>
<svg class="abs" style="left:16px;top:480px" width="5" height="5.2" viewBox="0 0 10 10"><rect width="10" height="10" fill="#fff"/><path d="M0 10 L10 0" stroke="#e01010" stroke-width="2.4"/></svg>
<svg class="abs" style="left:9px;top:489px" width="8" height="8" viewBox="0 0 16 16"><circle cx="6.5" cy="6.5" r="4.5" fill="none" stroke="#ccc" stroke-width="1.5"/><rect x="7" y="7" width="7" height="7" fill="#999" stroke="#ccc" stroke-width="1.3"/></svg>
<svg class="abs" style="left:7.3px;top:502.5px" width="11" height="9" viewBox="0 0 22 18"><rect x="7" y="1" width="14" height="10" rx="1" fill="#555" stroke="#ccc" stroke-width="1.6"/><rect x="1" y="6" width="14" height="10" rx="1" fill="#444" stroke="#ccc" stroke-width="1.6"/></svg>
<div class="abs" style="left:9px;top:524.4px;width:1.8px;height:1.8px;background:#cfcfcf;border-radius:50%"></div>
<div class="abs" style="left:12.2px;top:524.4px;width:1.8px;height:1.8px;background:#cfcfcf;border-radius:50%"></div>
<div class="abs" style="left:15.4px;top:524.4px;width:1.8px;height:1.8px;background:#cfcfcf;border-radius:50%"></div>
<div class="abs" style="left:1409.8px;top:52.5px;width:10.2px;height:720px;background:#2f2f2f;"></div>
<svg class="abs" style="left:1412.3px;top:56.2px" width="5" height="3.5" viewBox="0 0 10 6"><path d="M1 5 L5 1 L9 5" fill="none" stroke="#8a8a8a" stroke-width="1.8"/></svg>
<svg class="abs" style="left:1412.3px;top:766.2px" width="5" height="3.5" viewBox="0 0 10 6"><path d="M1 1 L5 5 L9 1" fill="none" stroke="#8a8a8a" stroke-width="1.8"/></svg>
<div class="abs" style="left:1420px;top:36px;width:20px;height:736.5px;background:#373737;border-left:1px solid #2a2a2a"></div>
<div class="abs" style="left:1420px;top:36px;width:20px;height:8.5px;background:#2b2b2b;"></div>
<svg class="abs" style="left:1432.5px;top:38.2px" width="5" height="4" viewBox="0 0 10 8"><path d="M4 1 L1 4 L4 7 M9 1 L6 4 L9 7" fill="none" stroke="#bdbdbd" stroke-width="1.4"/></svg>
<div class="abs" style="left:1421px;top:44.5px;width:19px;height:420px;background:#333;"></div>
<div class="abs" style="left:1421.5px;top:96.8px;width:18.5px;height:1px;background:#2a2a2a;"></div>
<div class="abs" style="left:1427px;top:100.0px;width:9px;height:1px;background:#3e3e3e;"></div>
<div class="abs" style="left:1421.5px;top:120px;width:18.5px;height:1px;background:#2a2a2a;"></div>
<div class="abs" style="left:1427px;top:123.2px;width:9px;height:1px;background:#3e3e3e;"></div>
<div class="abs" style="left:1421.5px;top:175px;width:18.5px;height:1px;background:#2a2a2a;"></div>
<div class="abs" style="left:1427px;top:178.2px;width:9px;height:1px;background:#3e3e3e;"></div>
<div class="abs" style="left:1421.5px;top:198.4px;width:18.5px;height:1px;background:#2a2a2a;"></div>
<div class="abs" style="left:1427px;top:201.6px;width:9px;height:1px;background:#3e3e3e;"></div>
<div class="abs" style="left:1421.5px;top:221.7px;width:18.5px;height:1px;background:#2a2a2a;"></div>
<div class="abs" style="left:1427px;top:224.89999999999998px;width:9px;height:1px;background:#3e3e3e;"></div>
<div class="abs" style="left:1421.5px;top:245px;width:18.5px;height:1px;background:#2a2a2a;"></div>
<div class="abs" style="left:1427px;top:248.2px;width:9px;height:1px;background:#3e3e3e;"></div>
<div class="abs" style="left:1421.5px;top:285px;width:18.5px;height:1px;background:#2a2a2a;"></div>
<div class="abs" style="left:1427px;top:288.2px;width:9px;height:1px;background:#3e3e3e;"></div>
<div class="abs" style="left:1421.5px;top:308px;width:18.5px;height:1px;background:#2a2a2a;"></div>
<div class="abs" style="left:1427px;top:311.2px;width:9px;height:1px;background:#3e3e3e;"></div>
<div class="abs" style="left:1421.5px;top:378px;width:18.5px;height:1px;background:#2a2a2a;"></div>
<div class="abs" style="left:1427px;top:381.2px;width:9px;height:1px;background:#3e3e3e;"></div>
<div class="abs" style="left:1421.5px;top:417px;width:18.5px;height:1px;background:#2a2a2a;"></div>
<div class="abs" style="left:1427px;top:420.2px;width:9px;height:1px;background:#3e3e3e;"></div>
<div class="abs" style="left:1421.5px;top:440px;width:18.5px;height:1px;background:#2a2a2a;"></div>
<div class="abs" style="left:1427px;top:443.2px;width:9px;height:1px;background:#3e3e3e;"></div>
<div class="abs" style="left:1421.5px;top:464px;width:18.5px;height:1px;background:#2a2a2a;"></div>
<div class="abs" style="left:1427px;top:47.5px;width:9px;height:1px;background:#3e3e3e;"></div>
<div class="abs" style="left:1424px;top:344.5px;width:14.5px;height:13px;background:#1e1e1e;border-radius:1.5px"></div>
<svg class="abs" style="left:1425.5px;top:50.0px" width="12" height="12" viewBox="0 0 24 24"><path d="M12 4 C5 4 2 9 2 13 C2 18 6 20 9 19 C11 18 10 15 12 15 C15 15 22 16 22 10 C22 6 17 4 12 4 Z" fill="none" stroke="#d4d4d4" stroke-width="2"/><circle cx="8" cy="9" r="1.6" fill="#d4d4d4"/><circle cx="13" cy="8" r="1.6" fill="#d4d4d4"/><circle cx="17" cy="10.5" r="1.6" fill="#d4d4d4"/></svg>
<svg class="abs" style="left:1425.5px;top:66.0px" width="12" height="12" viewBox="0 0 24 24"><path d="M3 6 H21 M3 12 H21 M3 18 H21" stroke="#d4d4d4" stroke-width="1.5"/><circle cx="15" cy="6" r="2.4" fill="#333" stroke="#d4d4d4" stroke-width="1.4"/><circle cx="8" cy="12" r="2.4" fill="#333" stroke="#d4d4d4" stroke-width="1.4"/><circle cx="14" cy="18" r="2.4" fill="#333" stroke="#d4d4d4" stroke-width="1.4"/></svg>
<svg class="abs" style="left:1425.5px;top:81.5px" width="12" height="12" viewBox="0 0 24 24"><path d="M4 3 V21 H21 C21 11 14 4 4 3 Z" fill="#999" stroke="#d4d4d4" stroke-width="1.6"/></svg>
<svg class="abs" style="left:1425.5px;top:105.0px" width="12" height="12" viewBox="0 0 24 24"><circle cx="12" cy="12" r="8" fill="#999" stroke="#d4d4d4" stroke-width="2"/><path d="M12 1 V4 M12 20 V23 M1 12 H4 M20 12 H23" stroke="#d4d4d4" stroke-width="2"/></svg>
<svg class="abs" style="left:1425.5px;top:128.4px" width="12" height="12" viewBox="0 0 24 24"><rect x="3" y="5" width="18" height="14" fill="none" stroke="#d4d4d4" stroke-width="1.6"/><path d="M3 12 H21 M9 5 V19 M15 5 V19" stroke="#d4d4d4" stroke-width="1.4"/><rect x="5" y="7" width="3" height="3" fill="#d4d4d4"/><rect x="16" y="14" width="3" height="3" fill="#d4d4d4"/></svg>
<svg class="abs" style="left:1425.5px;top:143.7px" width="12" height="12" viewBox="0 0 24 24"><rect x="8" y="13" width="8" height="9" fill="#d4d4d4"/><path d="M12 13 V4 M8 13 L5 5 M16 13 L19 5" stroke="#d4d4d4" stroke-width="1.8"/><path d="M10 3 H14 V7 H10 Z" fill="#d4d4d4"/></svg>
<svg class="abs" style="left:1425.5px;top:159.0px" width="12" height="12" viewBox="0 0 24 24"><circle cx="12" cy="7" r="4.5" fill="none" stroke="#d4d4d4" stroke-width="1.8"/><circle cx="7" cy="14" r="4.5" fill="none" stroke="#d4d4d4" stroke-width="1.8"/><circle cx="17" cy="14" r="4.5" fill="none" stroke="#d4d4d4" stroke-width="1.8"/><path d="M12 14 V21 M8 22 H16" stroke="#d4d4d4" stroke-width="1.8"/></svg>
<svg class="abs" style="left:1425.5px;top:182.0px" width="12" height="12" viewBox="0 0 24 24"><path d="M3 5.5 H21" stroke="#d4d4d4" stroke-width="1.6"/><path d="M3 12 H21" stroke="#d4d4d4" stroke-width="2.6"/><path d="M3 19 H21" stroke="#d4d4d4" stroke-width="3.6"/></svg>
<svg class="abs" style="left:1425.5px;top:205.0px" width="12" height="12" viewBox="0 0 24 24"><defs><linearGradient id="dg" x1="0" x2="1"><stop offset="0" stop-color="#444"/><stop offset="1" stop-color="#eee"/></linearGradient></defs><rect x="3" y="5" width="18" height="14" fill="url(#dg)" stroke="#d4d4d4" stroke-width="1.4"/></svg>
<svg class="abs" style="left:1425.5px;top:228.5px" width="12" height="12" viewBox="0 0 24 24"><circle cx="9" cy="9" r="7" fill="#999" stroke="#d4d4d4" stroke-width="1.4"/><circle cx="15" cy="15" r="7" fill="#bbb" fill-opacity=".7" stroke="#d4d4d4" stroke-width="1.4"/></svg>
<svg class="abs" style="left:1425.5px;top:252.0px" width="12" height="12" viewBox="0 0 24 24"><circle cx="12" cy="12" r="5.5" fill="#ddd"/><path d="M12 1.5 V5 M12 19 V22.5 M1.5 12 H5 M19 12 H22.5 M4.5 4.5 L7 7 M17 17 L19.5 19.5 M4.5 19.5 L7 17 M17 7 L19.5 4.5" stroke="#d4d4d4" stroke-width="1.8"/></svg>
<svg class="abs" style="left:1425.5px;top:267.6px" width="12" height="12" viewBox="0 0 24 24"><rect x="8" y="3" width="13" height="13" fill="none" stroke="#d4d4d4" stroke-width="1.6"/><circle cx="8" cy="16" r="5.5" fill="#333" stroke="#d4d4d4" stroke-width="1.6"/><path d="M5 16 H11 M8 13 V19" stroke="#d4d4d4" stroke-width="1.2"/></svg>
<svg class="abs" style="left:1425.5px;top:290.4px" width="12" height="12" viewBox="0 0 24 24"><path d="M12 3 L22 9 L12 15 L2 9 Z" fill="#d4d4d4"/><path d="M3.5 13 L12 18 L20.5 13" fill="none" stroke="#d4d4d4" stroke-width="2"/></svg>
<svg class="abs" style="left:1425.5px;top:313.0px" width="12" height="12" viewBox="0 0 24 24"><rect x="3" y="3" width="13" height="12" rx="2" fill="none" stroke="#d4d4d4" stroke-width="1.8"/><rect x="9" y="9" width="13" height="12" rx="2" fill="#333" stroke="#d4d4d4" stroke-width="1.8"/></svg>
<svg class="abs" style="left:1425.5px;top:328.6px" width="12" height="12" viewBox="0 0 24 24"><rect x="5" y="5" width="14" height="14" fill="none" stroke="#d4d4d4" stroke-width="1.6" stroke-dasharray="3 2"/><rect x="2.5" y="2.5" width="4" height="4" fill="#d4d4d4"/><rect x="17.5" y="2.5" width="4" height="4" fill="#d4d4d4"/><rect x="2.5" y="17.5" width="4" height="4" fill="#d4d4d4"/><rect x="17.5" y="17.5" width="4" height="4" fill="#d4d4d4"/></svg>
<svg class="abs" style="left:1425.5px;top:344.8px" width="12" height="12" viewBox="0 0 24 24"><path d="M4 2 V22" stroke="#fff" stroke-width="2"/><rect x="7" y="5" width="9" height="5.5" fill="#fff"/><rect x="7" y="13.5" width="14" height="5.5" fill="#fff"/></svg>
<svg class="abs" style="left:1425.5px;top:360.7px" width="12" height="12" viewBox="0 0 24 24"><rect x="3" y="3" width="11" height="11" fill="#d4d4d4"/><rect x="10" y="10" width="11" height="11" fill="#888" stroke="#d4d4d4" stroke-width="1.6"/></svg>
<svg class="abs" style="left:1425.5px;top:383.5px" width="12" height="12" viewBox="0 0 24 24"><path d="M2 20 L8.5 3 H10.5 L17 20 M5 14 H14" fill="none" stroke="#d4d4d4" stroke-width="2"/><path d="M21 2 V22" stroke="#d4d4d4" stroke-width="1.6"/></svg>
<svg class="abs" style="left:1425.5px;top:399.2px" width="12" height="12" viewBox="0 0 24 24"><path d="M13 3 H20 M13 3 V21 M18 3 V21" stroke="#d4d4d4" stroke-width="2"/><path d="M13 3 H10 a5 5 0 0 0 0 10 H13 Z" fill="#d4d4d4"/></svg>
<svg class="abs" style="left:1425.5px;top:422.7px" width="12" height="12" viewBox="0 0 24 24"><ellipse cx="12" cy="12" rx="6" ry="9" transform="rotate(12 12 12)" fill="none" stroke="#d4d4d4" stroke-width="2.6"/></svg>
<svg class="abs" style="left:1425.5px;top:445.0px" width="12" height="12" viewBox="0 0 24 24"><rect x="3" y="3" width="18" height="18" rx="2" fill="none" stroke="#d4d4d4" stroke-width="2"/><path d="M9 5 H17 V13 L13 10.5 L9 13 Z" fill="#d4d4d4"/></svg>
<div class="abs" style="left:0px;top:772.5px;width:1440px;height:11.5px;background:#2e2e2e;border-top:1px solid #262626"></div>
<div class="abs" style="left:25px;top:773.5px;width:27px;height:10px;background:#272727;"></div>
<span class="t" style="left:29px;top:776.90px;font-size:5.8px;color:#d0d0d0;letter-spacing:-0.312px;">66,67%</span>
<svg class="abs" style="left:58.2px;top:778.1px" width="4.5" height="3.2" viewBox="0 0 10 6"><path d="M1 1 L5 5 L9 1" fill="none" stroke="#cfcfcf" stroke-width="1.8"/></svg>
<div class="abs" style="left:67px;top:773.5px;width:28px;height:10px;background:#272727;"></div>
<span class="t" style="left:70px;top:776.90px;font-size:5.8px;color:#d0d0d0;">0°</span>
<svg class="abs" style="left:99.0px;top:778.1px" width="4.5" height="3.2" viewBox="0 0 10 6"><path d="M1 1 L5 5 L9 1" fill="none" stroke="#cfcfcf" stroke-width="1.8"/></svg>
<svg class="abs" style="left:111.5px;top:775.5px" width="15" height="6" viewBox="0 0 30 12"><path d="M1.5 1 V11" stroke="#cfcfcf" stroke-width="2"/><path d="M10 1 L4 6 L10 11 Z M27 1 L21 6 L27 11 Z" fill="#cfcfcf"/></svg>
<div class="abs" style="left:130px;top:773.5px;width:22px;height:10px;background:#272727;"></div>
<span class="t" style="left:132px;top:776.90px;font-size:5.8px;color:#d0d0d0;">2</span>
<svg class="abs" style="left:155.3px;top:778.1px" width="4.5" height="3.2" viewBox="0 0 10 6"><path d="M1 1 L5 5 L9 1" fill="none" stroke="#cfcfcf" stroke-width="1.8"/></svg>
<svg class="abs" style="left:167px;top:775.5px" width="15" height="6" viewBox="0 0 30 12"><path d="M3 1 L9 6 L3 11 Z M20 1 L26 6 L20 11 Z" fill="#cfcfcf"/><path d="M28.5 1 V11" stroke="#cfcfcf" stroke-width="2"/></svg>
<span class="t" style="left:232px;top:776.50px;font-size:5.4px;color:#b5b5b5;letter-spacing:0.032px;">Sélection</span>
<svg class="abs" style="left:302.5px;top:775.5px" width="4" height="6" viewBox="0 0 8 12"><path d="M1 1 L7 6 L1 11 Z" fill="#cfcfcf"/></svg>
<svg class="abs" style="left:312.5px;top:775.8px" width="3" height="5.4" viewBox="0 0 6 11"><path d="M5 1 L1 5.5 L5 10" fill="none" stroke="#7a7a7a" stroke-width="1.4"/></svg>
<div class="abs" style="left:897px;top:774.5px;width:14px;height:7px;background:#424242;border-radius:3.5px"></div>
<svg class="abs" style="left:1403.5px;top:775.8px" width="3" height="5.4" viewBox="0 0 6 11"><path d="M1 1 L5 5.5 L1 10" fill="none" stroke="#7a7a7a" stroke-width="1.4"/></svg>
<div class="abs" style="left:1410px;top:773.5px;width:10.5px;height:10.5px;background:#383838;"></div>
<div class="abs" style="left:1278.5px;top:304.8px;width:141px;height:117px;background:#363636;box-shadow:0 0 0 0.5px #222"></div>
<div class="abs" style="left:1278.5px;top:304.8px;width:141px;height:17.2px;background:#2b2b2b;"></div>
<div class="abs" style="left:1319px;top:304.8px;width:42.5px;height:17.2px;background:#363636;"></div>
<span class="t" style="left:1283.5px;top:311.40px;font-size:6px;color:#9c9c9c;letter-spacing:-0.302px;">Plans</span>
<span class="t" style="left:1303px;top:311.40px;font-size:6px;color:#9c9c9c;letter-spacing:-0.023px;">Trans</span>
<svg class="abs" style="left:1320px;top:311px" width="3.6" height="7" viewBox="0 0 7 14"><path d="M1 5.5 L3.5 2 L6 5.5 M1 8.5 L3.5 12 L6 8.5" fill="none" stroke="#aaa" stroke-width="1.2"/></svg>
<span class="t" style="left:1326px;top:311.40px;font-size:6px;color:#f4f4f4;font-weight:bold;letter-spacing:-0.167px;">Alignement</span>
<span class="t" style="left:1366.5px;top:311.40px;font-size:6px;color:#9c9c9c;letter-spacing:0.193px;">Pathfi</span>
<svg class="abs" style="left:1395.5px;top:311.8px" width="7" height="5.4" viewBox="0 0 14 11"><path d="M1.5 1 L6 5.5 L1.5 10 M8 1 L12.5 5.5 L8 10" fill="none" stroke="#bdbdbd" stroke-width="1.6"/></svg>
<div class="abs" style="left:1405.3px;top:311px;width:0.8px;height:7px;background:#777;"></div>
<svg class="abs" style="left:1409.8px;top:311.7px" width="6.4" height="5.6" viewBox="0 0 13 11"><path d="M0 1.5 H13 M0 5.5 H13 M0 9.5 H13" stroke="#8f8f8f" stroke-width="2"/></svg>
<span class="t" style="left:1281px;top:327.50px;font-size:6px;color:#c6c6c6;letter-spacing:-0.125px;">Alignement des objets :</span>
<span class="t" style="left:1281px;top:361.00px;font-size:6px;color:#c6c6c6;letter-spacing:-0.161px;">Répartition des objets :</span>
<span class="t" style="left:1281px;top:394.20px;font-size:6px;color:#c6c6c6;letter-spacing:-0.173px;">Répartition de l'espacement :</span>
<span class="t" style="left:1366.8px;top:394.20px;font-size:6px;color:#c6c6c6;letter-spacing:-0.155px;">Aligner sur :</span>
<div class="abs" style="left:1281px;top:355.6px;width:137px;height:1px;background:#2c2c2c;"></div>
<div class="abs" style="left:1281px;top:388.5px;width:137px;height:1px;background:#2c2c2c;"></div>
<div class="abs" style="left:1360.6px;top:391px;width:1px;height:29px;background:#2c2c2c;"></div>
<div class="abs" style="left:1367.5px;top:404.7px;width:13.5px;height:12.8px;background:#1f1f1f;border-radius:1px"></div>
<svg class="abs" style="left:1283.0px;top:339.1px" width="11" height="11" viewBox="0 0 24 24"><path d="M3 2 V22" stroke="#e2e2e2" stroke-width="1.6"/><rect x="6" y="5" width="8" height="5" fill="#e2e2e2"/><rect x="6" y="14" width="14" height="5" fill="#e2e2e2"/></svg>
<svg class="abs" style="left:1303.0px;top:339.1px" width="11" height="11" viewBox="0 0 24 24"><path d="M12 2 V22" stroke="#e2e2e2" stroke-width="1.6"/><rect x="8" y="5" width="8" height="5" fill="#e2e2e2"/><rect x="5" y="14" width="14" height="5" fill="#e2e2e2"/></svg>
<svg class="abs" style="left:1323.9px;top:339.1px" width="11" height="11" viewBox="0 0 24 24"><path d="M21 2 V22" stroke="#e2e2e2" stroke-width="1.6"/><rect x="10" y="5" width="8" height="5" fill="#e2e2e2"/><rect x="4" y="14" width="14" height="5" fill="#e2e2e2"/></svg>
<svg class="abs" style="left:1363.2px;top:339.1px" width="11" height="11" viewBox="0 0 24 24"><path d="M2 3 H22" stroke="#e2e2e2" stroke-width="1.6"/><rect x="5" y="6" width="5" height="14" fill="#e2e2e2"/><rect x="14" y="6" width="5" height="8" fill="#e2e2e2"/></svg>
<svg class="abs" style="left:1383.3px;top:339.1px" width="11" height="11" viewBox="0 0 24 24"><path d="M2 12 H22" stroke="#e2e2e2" stroke-width="1.6"/><rect x="5" y="5" width="5" height="14" fill="#e2e2e2"/><rect x="14" y="8" width="5" height="8" fill="#e2e2e2"/></svg>
<svg class="abs" style="left:1403.3px;top:339.1px" width="11" height="11" viewBox="0 0 24 24"><path d="M2 21 H22" stroke="#e2e2e2" stroke-width="1.6"/><rect x="5" y="4" width="5" height="14" fill="#e2e2e2"/><rect x="14" y="10" width="5" height="8" fill="#e2e2e2"/></svg>
<svg class="abs" style="left:1283.0px;top:372.3px" width="11" height="11" viewBox="0 0 24 24"><path d="M2 3 H22 M2 13 H22" stroke="#e2e2e2" stroke-width="1.5"/><rect x="7" y="5" width="10" height="4" fill="#e2e2e2"/><rect x="4" y="15" width="16" height="5" fill="#e2e2e2"/></svg>
<svg class="abs" style="left:1303.0px;top:372.3px" width="11" height="11" viewBox="0 0 24 24"><path d="M2 7 H22 M2 17 H22" stroke="#e2e2e2" stroke-width="1.5"/><rect x="7" y="5" width="10" height="4" fill="#e2e2e2"/><rect x="4" y="14.5" width="16" height="5" fill="#e2e2e2"/></svg>
<svg class="abs" style="left:1323.9px;top:372.3px" width="11" height="11" viewBox="0 0 24 24"><path d="M2 10 H22 M2 21 H22" stroke="#e2e2e2" stroke-width="1.5"/><rect x="7" y="4" width="10" height="4" fill="#e2e2e2"/><rect x="4" y="14" width="16" height="5" fill="#e2e2e2"/></svg>
<svg class="abs" style="left:1363.2px;top:372.3px" width="11" height="11" viewBox="0 0 24 24"><path d="M3 2 V22 M14 2 V22" stroke="#e2e2e2" stroke-width="1.5"/><rect x="5" y="4" width="5" height="16" fill="#e2e2e2"/><rect x="16" y="7" width="4" height="10" fill="#e2e2e2"/></svg>
<svg class="abs" style="left:1383.3px;top:372.3px" width="11" height="11" viewBox="0 0 24 24"><path d="M7 2 V22 M17 2 V22" stroke="#e2e2e2" stroke-width="1.5"/><rect x="4.5" y="4" width="5" height="16" fill="#e2e2e2"/><rect x="15" y="7" width="4" height="10" fill="#e2e2e2"/></svg>
<svg class="abs" style="left:1403.3px;top:372.3px" width="11" height="11" viewBox="0 0 24 24"><path d="M10 2 V22 M21 2 V22" stroke="#e2e2e2" stroke-width="1.5"/><rect x="3" y="4" width="5" height="16" fill="#e2e2e2"/><rect x="15" y="7" width="4" height="10" fill="#e2e2e2"/></svg>
<svg class="abs" style="left:1283.0px;top:405.5px" width="11" height="11" viewBox="0 0 24 24"><rect x="8" y="4" width="10" height="5" fill="#e2e2e2"/><rect x="5" y="14" width="16" height="5" fill="#e2e2e2"/><path d="M2 8 V16 M0.5 10 L2 8 L3.5 10 M0.5 14 L2 16 L3.5 14" stroke="#e2e2e2" stroke-width="1.1" fill="none"/></svg>
<svg class="abs" style="left:1300.5px;top:405.5px" width="11" height="11" viewBox="0 0 24 24"><rect x="4" y="5" width="5" height="16" fill="#e2e2e2"/><rect x="14" y="8" width="5" height="10" fill="#e2e2e2"/><path d="M8 2.5 H16" stroke="#e2e2e2" stroke-width="1.3"/></svg>
<svg class="abs" style="left:1386.0px;top:405.5px" width="11" height="11" viewBox="0 0 24 24"><rect x="3" y="3" width="3.4" height="3.4" fill="#e2e2e2"/><rect x="3" y="10" width="3.4" height="3.4" fill="#e2e2e2"/><rect x="3" y="17" width="3.4" height="3.4" fill="#e2e2e2"/><rect x="10" y="3" width="3.4" height="3.4" fill="#e2e2e2"/><rect x="10" y="17" width="3.4" height="3.4" fill="#e2e2e2"/><rect x="17" y="3" width="3.4" height="3.4" fill="#e2e2e2"/><rect x="17" y="10" width="3.4" height="3.4" fill="#e2e2e2"/><rect x="17" y="17" width="3.4" height="3.4" fill="#e2e2e2"/></svg>
<svg class="abs" style="left:1403.3px;top:405.5px" width="11" height="11" viewBox="0 0 24 24"><rect x="3" y="3" width="3.4" height="3.4" fill="#e2e2e2"/><rect x="3" y="10" width="3.4" height="3.4" fill="#e2e2e2"/><rect x="3" y="17" width="3.4" height="3.4" fill="#e2e2e2"/><rect x="10" y="3" width="3.4" height="3.4" fill="#e2e2e2"/><rect x="10" y="17" width="3.4" height="3.4" fill="#e2e2e2"/><rect x="17" y="3" width="3.4" height="3.4" fill="#e2e2e2"/><rect x="17" y="10" width="3.4" height="3.4" fill="#e2e2e2"/><rect x="17" y="17" width="3.4" height="3.4" fill="#e2e2e2"/><path d="M6 6 L17 17 M13 17.5 H17.5 V13" stroke="#e2e2e2" stroke-width="1.8" fill="none"/></svg>
<svg class="abs" style="left:1368.8px;top:405.5px" width="11" height="11" viewBox="0 0 24 24"><path d="M3 7 H8 M5.5 4 V9.5" stroke="#e2e2e2" stroke-width="1.5"/><path d="M8 8 H17 a2 2 0 0 1 2 2 V20 H8 Z" fill="none" stroke="#e2e2e2" stroke-width="1.8"/><rect x="11.5" y="12" width="5" height="6" fill="#e2e2e2"/></svg>
<div class="abs" style="left:1316.5px;top:405px;width:31.5px;height:12px;background:#3a3a3a;border:1px solid #414141"></div>
<svg class="abs" style="left:1319px;top:406.5px" width="5" height="9" viewBox="0 0 10 18"><path d="M2 7 L5 3.5 L8 7 M2 11 L5 14.5 L8 11" fill="none" stroke="#4e4e4e" stroke-width="1.5"/></svg>
<span class="t" style="left:1328px;top:408.30px;font-size:5.8px;color:#4f4f4f;">0 mm</span>
<div class="abs" style="left:1089px;top:489.3px;width:282px;height:19.8px;background:#2b2b2b;border-radius:3.5px;box-shadow:0 0.5px 1.5px rgba(0,0,0,.5)"></div>
<div class="abs" style="left:1092.8px;top:494px;width:1.2px;height:10.5px;background:#3c3c3c;"></div>
<div class="abs" style="left:1100px;top:492.4px;width:80px;height:13.7px;background:#323232;border:1px solid #444;border-radius:1.5px"></div>
<svg class="abs" style="left:1104.5px;top:494.3px" width="10" height="10" viewBox="0 0 20 20"><path d="M8 3 L14 13 H2 Z" fill="none" stroke="#cfcfcf" stroke-width="1.6"/><circle cx="13" cy="12" r="5" fill="#2b2b2b" stroke="#cfcfcf" stroke-width="1.6"/></svg>
<span class="t" style="left:1117.7px;top:496.40px;font-size:7px;color:#dadada;letter-spacing:0.092px;">Ajouter une forme</span>
<svg class="abs" style="left:1177px;top:503.5px" width="2.4" height="2.4" viewBox="0 0 4 4"><path d="M4 0 V4 H0 Z" fill="#bbb"/></svg>
<div class="abs" style="left:1183.3px;top:492.4px;width:110.8px;height:13.7px;background:#323232;border:1px solid #444;border-radius:1.5px"></div>
<svg class="abs" style="left:1186.5px;top:493px" width="12" height="12" viewBox="0 0 26 26"><path d="M5 11 V20 a2 2 0 0 0 2 2 H18 a2 2 0 0 0 2 -2 V11" fill="none" stroke="#dcdcdc" stroke-width="2.2"/><rect x="9.5" y="14" width="5.5" height="5" fill="#dcdcdc"/><path d="M19 2 L20.2 5.3 L23.5 6.5 L20.2 7.7 L19 11 L17.8 7.7 L14.5 6.5 L17.8 5.3 Z" fill="#dcdcdc"/><circle cx="6" cy="5" r="4" fill="#2b8af5"/></svg>
<span class="t" style="left:1200.5px;top:496.40px;font-size:7px;color:#dadada;letter-spacing:0.007px;">Générer des vecteurs (Beta)</span>
<div class="abs" style="left:1299px;top:494px;width:1px;height:10.5px;background:#3c3c3c;"></div>
<svg class="abs" style="left:1301.5px;top:494.5px" width="9" height="9" viewBox="0 0 24 24"><path d="M4 4 H20 V8.5 H18.4 L17.8 6.2 H13.6 V18.6 L16 19.2 V20.5 H8 V19.2 L10.4 18.6 V6.2 H6.2 L5.6 8.5 H4 Z" fill="#e2e2e2"/></svg>
<svg class="abs" style="left:1319.5px;top:494px" width="10" height="10" viewBox="0 0 20 20"><path d="M2 5 H7 M4.5 2 V8" stroke="#dcdcdc" stroke-width="1.4"/><path d="M7 6 H15 a2 2 0 0 1 2 2 V17 H7 Z" fill="none" stroke="#dcdcdc" stroke-width="1.6"/><rect x="10" y="10" width="4.5" height="5" fill="#dcdcdc"/></svg>
<svg class="abs" style="left:1337.5px;top:494.5px" width="10" height="9" viewBox="0 0 20 18"><rect x="1" y="1" width="17" height="13" rx="2" fill="none" stroke="#dcdcdc" stroke-width="1.8"/><rect x="4" y="4" width="6" height="4" fill="#dcdcdc"/><circle cx="14" cy="13" r="3.6" fill="#2b2b2b" stroke="#dcdcdc" stroke-width="1.5"/></svg>
<div class="abs" style="left:1356px;top:498.4px;width:1.9px;height:1.9px;background:#e0e0e0;border-radius:50%"></div>
<div class="abs" style="left:1359.3px;top:498.4px;width:1.9px;height:1.9px;background:#e0e0e0;border-radius:50%"></div>
<div class="abs" style="left:1362.6px;top:498.4px;width:1.9px;height:1.9px;background:#e0e0e0;border-radius:50%"></div>
<div class="abs" style="left:0px;top:783.3px;width:1440px;height:26.7px;background:#eeeeee;border-top:1px solid #fafafa"></div>
<svg class="abs" style="left:0;top:783px" width="4" height="4" viewBox="0 0 4 4"><path d="M0 0 H4 A4 4 0 0 0 0 4 Z" fill="#2e2e2e"/></svg>
<svg class="abs" style="left:11.5px;top:788.5px" width="15" height="14" viewBox="0 0 30 28"><path d="M15 2 L28 26 H2 Z" fill="#f6c416" stroke="#f6c416" stroke-width="3" stroke-linejoin="round"/><path d="M9 20 a3 3 0 0 1 1 -5.8 a4.5 4.5 0 0 1 8.8 -.6 a3.2 3.2 0 0 1 1.2 6.2 Z" fill="#2a2a2a"/><path d="M12 22 L11 25 M16 22 L15 25" stroke="#2a2a2a" stroke-width="1.6"/></svg>
<span class="t" style="left:30.2px;top:788.30px;font-size:7px;color:#1c1c1c;letter-spacing:0.026px;">Alerte météo</span>
<span class="t" style="left:30px;top:797.80px;font-size:6.8px;color:#626262;letter-spacing:-0.064px;">Récemment émis</span>
<div class="abs" style="left:380px;top:790px;width:6.3px;height:6.3px;background:linear-gradient(135deg,#4cc4f8,#0a7ad8)"></div>
<div class="abs" style="left:386.9px;top:790px;width:6.3px;height:6.3px;background:linear-gradient(135deg,#4cc4f8,#0a7ad8)"></div>
<div class="abs" style="left:380px;top:796.9px;width:6.3px;height:6.3px;background:linear-gradient(135deg,#4cc4f8,#0a7ad8)"></div>
<div class="abs" style="left:386.9px;top:796.9px;width:6.3px;height:6.3px;background:linear-gradient(135deg,#4cc4f8,#0a7ad8)"></div>
<div class="abs" style="left:401.3px;top:788px;width:122.5px;height:17px;background:#fbfbfb;border-radius:8.5px;box-shadow:0 0 0 0.6px #e2e2e2"></div>
<svg class="abs" style="left:406.5px;top:792px" width="9.5" height="9.5" viewBox="0 0 19 19"><circle cx="8" cy="8" r="5.6" fill="none" stroke="#222" stroke-width="2"/><path d="M12 12 L17.5 17.5" stroke="#222" stroke-width="2.2"/></svg>
<span class="t" style="left:421.5px;top:793.00px;font-size:7.2px;color:#5e5e5e;letter-spacing:0.128px;">Rechercher</span>
<svg class="abs" style="left:530.5px;top:791.5px" width="12" height="12" viewBox="0 0 28 28"><rect x="9" y="3" width="17" height="15" fill="#c8c8c8"/><rect x="6" y="6" width="17" height="15" fill="#8a8a8a"/><rect x="2" y="9" width="18" height="17" fill="#1c1c1c"/><rect x="9" y="9" width="11" height="10" fill="#e6e6e6"/></svg>
<svg class="abs" style="left:555.5px;top:789.3px" width="14" height="14" viewBox="0 0 28 28"><path d="M2 5 H11 L13 8 H26 V23 H2 Z" fill="#f5b921"/><rect x="2" y="10" width="24" height="14" rx="1.5" fill="#fcd256"/><rect x="8" y="17" width="12" height="7" fill="#2f83d6"/></svg>
<svg class="abs" style="left:579.8px;top:789.3px" width="14" height="14" viewBox="0 0 28 28"><path d="M9 8 V6 a5 5 0 0 1 10 0 V8" fill="none" stroke="#1c5fb0" stroke-width="2"/><rect x="2" y="7" width="24" height="19" rx="3" fill="#1459a8"/><rect x="8.5" y="11" width="5" height="5" fill="#f25022"/><rect x="14.5" y="11" width="5" height="5" fill="#7fba00"/><rect x="8.5" y="17" width="5" height="5" fill="#00a4ef"/><rect x="14.5" y="17" width="5" height="5" fill="#ffb900"/></svg>
<svg class="abs" style="left:605.0px;top:788.8px" width="15" height="15" viewBox="0 0 28 28"><rect x="3" y="3" width="13" height="13" fill="#fff" stroke="#d8322c" stroke-width="2.4" stroke-dasharray="3 1.6"/><path d="M14 8 V22 M8 15 H26" stroke="#3a8ad8" stroke-width="2.6"/><circle cx="14" cy="24" r="3" fill="none" stroke="#3a8ad8" stroke-width="2"/><circle cx="25" cy="15" r="2.6" fill="none" stroke="#3a8ad8" stroke-width="2"/></svg>
<svg class="abs" style="left:629.3px;top:788.8px" width="15" height="15" viewBox="0 0 28 28"><path d="M10 5 H24 a2 2 0 0 1 2 2 V22 a2 2 0 0 1 -2 2 H10 Z" fill="#28a8ea"/><path d="M10 14 H26 V22 a2 2 0 0 1 -2 2 H10 Z" fill="#0f6cbd"/><rect x="2" y="8" width="14" height="14" rx="2" fill="#0f5fb4"/><ellipse cx="9" cy="15" rx="3.2" ry="4" fill="none" stroke="#fff" stroke-width="2"/><rect x="17" y="19" width="8" height="4" fill="#2ad0c8"/></svg>
<svg class="abs" style="left:654.0px;top:788.8px" width="15" height="15" viewBox="0 0 28 28"><circle cx="14" cy="14" r="11.5" fill="#3a6fc4"/><circle cx="14" cy="14" r="11.5" fill="none" stroke="#8aa8d8" stroke-width="3" stroke-dasharray="4.5 3"/><circle cx="14" cy="14" r="7" fill="#e8eef8"/><path d="M9 17 L18 10 M13 9 H19 V15" stroke="#2c59a8" stroke-width="2.4" fill="none"/></svg>
<svg class="abs" style="left:679.0px;top:789.0px" width="14.5" height="14.5" viewBox="0 0 28 28"><rect x="1" y="1" width="26" height="26" rx="2.5" fill="#117c10"/><circle cx="14" cy="14" r="9" fill="#fff"/><path d="M8 8 C12 11 16 17 19 22 M20 8 C16 11 12 17 9 22" stroke="#117c10" stroke-width="2.6" fill="none"/></svg>
<svg class="abs" style="left:703.8px;top:789.0px" width="14.5" height="14.5" viewBox="0 0 28 28"><rect x="1" y="1" width="26" height="26" rx="2" fill="#b4161a"/><path d="M6 22 V6 H15 M6 13 H13" stroke="#fff" stroke-width="3" fill="none"/><path d="M14 11 H23 L14 22 H23" stroke="#fff" stroke-width="2.6" fill="none"/></svg>
<svg class="abs" style="left:729.0px;top:789.8px" width="13" height="13" viewBox="0 0 28 28"><circle cx="14" cy="14" r="12" fill="#2a2a2c"/><circle cx="14" cy="14" r="12" fill="none" stroke="#111" stroke-width="1"/><circle cx="14" cy="9" r="4" fill="none" stroke="#d8d8d8" stroke-width="2"/><circle cx="9.5" cy="17" r="4" fill="none" stroke="#d8d8d8" stroke-width="2"/><circle cx="18.5" cy="17" r="4" fill="none" stroke="#d8d8d8" stroke-width="2"/></svg>
<svg class="abs" style="left:753.3px;top:789.3px" width="14" height="14" viewBox="0 0 28 28"><circle cx="14" cy="14" r="12.5" fill="#e33b2e"/><path d="M14 14 L3.2 7.8 A12.5 12.5 0 0 0 8 25 Z" fill="#2da94f"/><path d="M14 14 L8 25 A12.5 12.5 0 0 0 26.5 14 Z" fill="#fcc31e"/><path d="M14 14 L26.5 14 A12.5 12.5 0 0 0 24.8 7.8 L14 7.8 Z" fill="#e33b2e"/><circle cx="14" cy="14" r="6" fill="#fff"/><circle cx="14" cy="14" r="4.6" fill="#4a8af4"/></svg>
<div class="abs" style="left:758.3px;top:805.3px;width:4px;height:1.3px;background:#7a7a7a;border-radius:1px"></div>
<svg class="abs" style="left:778.2px;top:789.5px" width="13.5" height="13.5" viewBox="0 0 28 28"><circle cx="14" cy="14" r="12.5" fill="#14325c"/><circle cx="18.5" cy="10.5" r="4.2" fill="none" stroke="#fff" stroke-width="2.2"/><circle cx="10" cy="18.5" r="3.4" fill="#fff"/><path d="M2 13.5 L10 18 L16 12" stroke="#fff" stroke-width="3" fill="none"/></svg>
<svg class="abs" style="left:802.0px;top:788.8px" width="15" height="15" viewBox="0 0 28 28"><path d="M11 2 H17 V11 L24 24 a2 2 0 0 1 -2 2 H6 a2 2 0 0 1 -2 -2 L11 11 Z" fill="#f4f4ee" stroke="#cfcfc4" stroke-width="1"/><path d="M9.5 15 L18.5 15 L23 24 H5 Z" fill="#c8d41c"/><path d="M11 19 L17 19 L20 24 H8 Z" fill="#4caa2c"/></svg>
<svg class="abs" style="left:827.0px;top:788.8px" width="15" height="15" viewBox="0 0 28 28"><rect x="8" y="3" width="18" height="22" rx="2" fill="#1f9e58"/><rect x="17" y="3" width="9" height="11" fill="#33c481"/><rect x="17" y="14" width="9" height="11" fill="#107c41"/><rect x="2" y="7" width="14" height="14" rx="1.5" fill="#0f6e39"/><path d="M6 10.5 L12 17.5 M12 10.5 L6 17.5" stroke="#fff" stroke-width="2.2"/></svg>
<svg class="abs" style="left:851.8px;top:788.8px" width="15" height="15" viewBox="0 0 28 28"><rect x="8" y="3" width="18" height="22" rx="2" fill="#2b7cd3"/><rect x="8" y="3" width="18" height="7" fill="#41a5ee"/><rect x="8" y="17" width="18" height="8" fill="#185abd"/><rect x="2" y="7" width="14" height="14" rx="1.5" fill="#134fa8"/><path d="M5 10.5 L7 17.5 L9 12 L11 17.5 L13 10.5" stroke="#fff" stroke-width="1.8" fill="none"/></svg>
<svg class="abs" style="left:877.0px;top:789.3px" width="14" height="14" viewBox="0 0 28 28"><rect x="1.5" y="1.5" width="25" height="25" rx="4" fill="#b30b00"/><path d="M7 21 C11 18 14 10 13.5 6.5 C13 5 11.5 6 12.5 9 C14 14 18 18 22 18 C23 17 21 16 17 16.5 C12 17 8 19 7 21 Z" fill="none" stroke="#fff" stroke-width="1.8"/></svg>
<svg class="abs" style="left:901.3px;top:788.8px" width="15" height="15" viewBox="0 0 28 28"><path d="M3 17 L15 8 H8 M15 8 L12 5" stroke="#ea7600" stroke-width="3" fill="none" stroke-linecap="round"/><ellipse cx="17" cy="16" rx="8.5" ry="7.5" fill="#ea7600"/><circle cx="17" cy="16" r="4.6" fill="#fff"/><circle cx="17" cy="16" r="2.8" fill="#265787"/></svg>
<div class="abs" style="left:923px;top:787px;width:21.5px;height:20px;background:#f9f9f9;border-radius:2.5px;box-shadow:0 0 0 0.6px #e4e4e4"></div>
<div class="abs" style="left:927.1px;top:789.9px;width:12.8px;height:12.8px;border-radius:2.8px;background:#300000"></div>
<span class="t" style="left:927.1px;top:792.4px;width:12.8px;text-align:center;font-size:7.4px;font-weight:bold;color:#ff9a00;letter-spacing:-0.2px">Ai</span>
<div class="abs" style="left:929.3px;top:805.2px;width:8.6px;height:1.5px;background:#5a7894;border-radius:1px"></div>
<div class="abs" style="left:951.9px;top:789.9px;width:12.8px;height:12.8px;border-radius:2.8px;background:#001e36"></div>
<span class="t" style="left:951.9px;top:792.4px;width:12.8px;text-align:center;font-size:7.4px;font-weight:bold;color:#31a8ff;letter-spacing:-0.2px">Ps</span>
<div class="abs" style="left:956.6px;top:805.3px;width:3.6px;height:1.3px;background:#7a7a7a;border-radius:1px"></div>
<div class="abs" style="left:976.6px;top:789.9px;width:12.8px;height:12.8px;border-radius:2.8px;background:#49021f"></div>
<span class="t" style="left:976.6px;top:792.4px;width:12.8px;text-align:center;font-size:7.4px;font-weight:bold;color:#ff3366;letter-spacing:-0.2px">Id</span>
<div class="abs" style="left:1001.4px;top:789.9px;width:12.8px;height:12.8px;border-radius:2.8px;background:#470137"></div>
<span class="t" style="left:1001.4px;top:792.4px;width:12.8px;text-align:center;font-size:7.4px;font-weight:bold;color:#ff61f6;letter-spacing:-0.2px">Xd</span>
<div class="abs" style="left:1026.1px;top:789.9px;width:12.8px;height:12.8px;border-radius:2.8px;background:#00005b"></div>
<span class="t" style="left:1026.1px;top:792.4px;width:12.8px;text-align:center;font-size:7.4px;font-weight:bold;color:#9999ff;letter-spacing:-0.2px">An</span>
<svg class="abs" style="left:1050.5px;top:789.3px" width="14" height="14" viewBox="0 0 28 28"><path d="M13 12 H15.5 L16.5 22 H12 Z" fill="#6a4a1e"/><path d="M4 10 C4 5 10 2 14 4 C19 2 25 6 24 10 C23 13 18 12 15 13 C11 14 5 14 4 10 Z" fill="#4a7a1e"/><path d="M8 9 C10 6 14 7 15 9 C18 7 21 8 21 10" stroke="#2e5a12" stroke-width="1.5" fill="none"/><path d="M5 22 H23 L21 25 H7 Z" fill="#7a5a2a"/></svg>
<svg class="abs" style="left:1333.5px;top:794px" width="7" height="4.5" viewBox="0 0 14 9"><path d="M1.5 7.5 L7 2 L12.5 7.5" fill="none" stroke="#222" stroke-width="1.8"/></svg>
<svg class="abs" style="left:1350px;top:791.5px" width="10.5" height="9" viewBox="0 0 21 18"><path d="M1.5 6.5 C7 1 14 1 19.5 6.5" fill="none" stroke="#9a9a9a" stroke-width="1.6"/><path d="M4.5 10 C8 6.5 13 6.5 16.5 10" fill="none" stroke="#8a8a8a" stroke-width="1.6"/><path d="M7.5 13 C9.5 11.2 11.5 11.2 13.5 13" fill="none" stroke="#7a7a7a" stroke-width="1.6"/><circle cx="10.5" cy="15.5" r="1.5" fill="#444"/></svg>
<svg class="abs" style="left:1363.5px;top:791.5px" width="11" height="9.5" viewBox="0 0 22 19"><path d="M2 6.5 H6 L11 2 V17 L6 12.5 H2 Z" fill="none" stroke="#555" stroke-width="1.6" stroke-linejoin="round"/><path d="M14 6 C15.8 8 15.8 11 14 13 M17 3.5 C20 7 20 12 17 15.5" fill="none" stroke="#8a8a8a" stroke-width="1.5"/></svg>
<span class="t" style="left:1401.2px;top:788.85px;font-size:6.3px;color:#2a2a2a;letter-spacing:0.127px;">21:59</span>
<span class="t" style="left:1383px;top:798.05px;font-size:6.3px;color:#2a2a2a;letter-spacing:0.307px;">29/07/2024</span>
<svg class="abs" style="left:1422px;top:791px" width="8.5" height="10.5" viewBox="0 0 17 21"><path d="M8.5 1.5 C4.5 1.5 3.5 5 3.5 8 C3.5 12 1.5 13.5 1.5 15 H15.5 C15.500 13.500 13.500 12 13.500 8 C13.500 5 12.500 1.500 8.500 1.500 Z" fill="#1d2b44"/><path d="M6 17 a2.5 2.5 0 0 0 5 0 Z" fill="#1d2b44"/></svg>
</body></html>
